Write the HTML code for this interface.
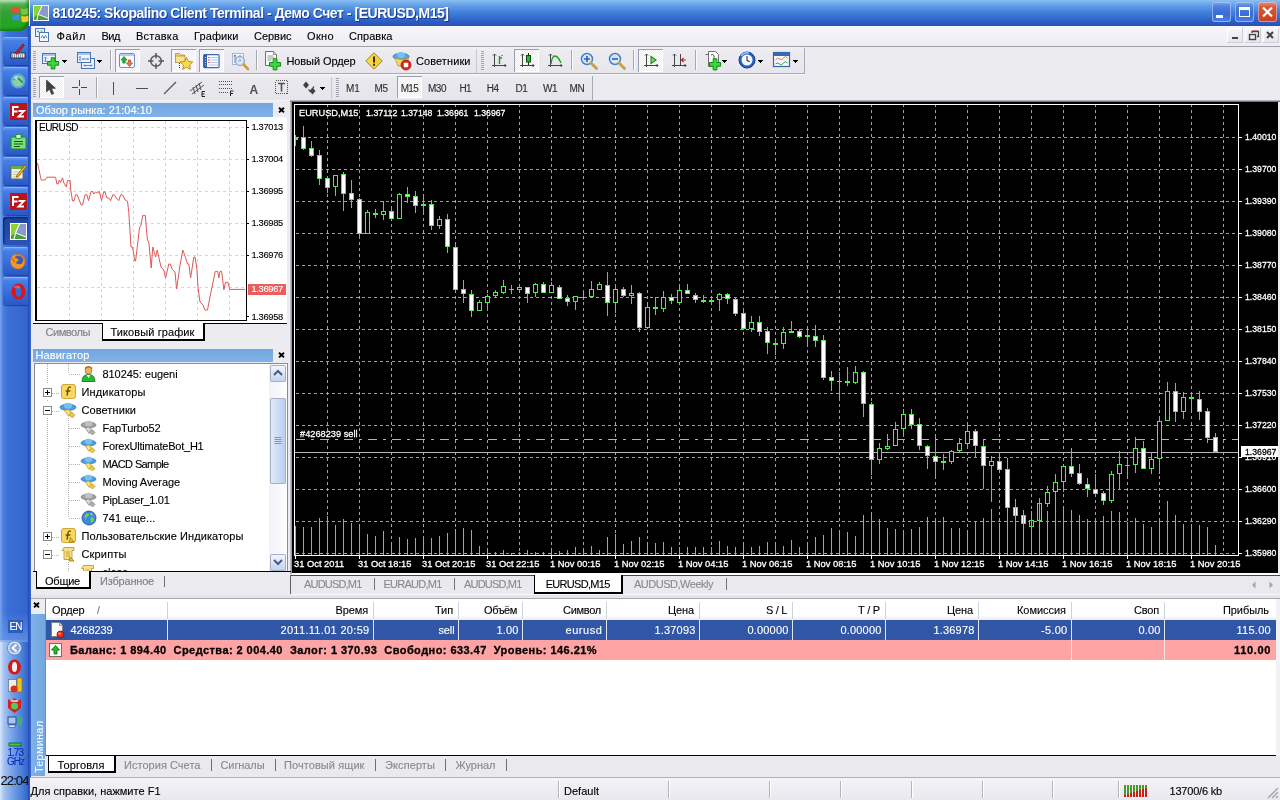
<!DOCTYPE html>
<html><head><meta charset="utf-8"><title>Terminal</title>
<style>
html,body{margin:0;padding:0;}
body{width:1280px;height:800px;overflow:hidden;position:relative;background:#ececf1;font-family:"Liberation Sans",sans-serif;}
.t{position:absolute;white-space:pre;font-family:"Liberation Sans",sans-serif;}
.b{position:absolute;}
svg{position:absolute;overflow:visible;}
</style></head><body><div id="root" style="position:absolute;left:0;top:0;width:1280px;height:800px;will-change:transform">
<div class="b" style="left:0px;top:0px;width:29px;height:800px;background:linear-gradient(90deg,#7aa6ee 0px,#4a80e0 3px,#3a6fd6 8px,#3566cf 26px,#2a55b8 30px);"></div>
<div class="b" style="left:0px;top:0px;width:29px;height:31px;background:linear-gradient(180deg,#8ed28e 0px,#4cae4c 5px,#35a035 12px,#26a226 22px,#1fae1f 31px);border-radius:0 0 9px 0;box-shadow:inset -2px -2px 3px rgba(0,60,0,.45), inset 0 2px 2px rgba(255,255,255,.35)"></div>
<svg width="21" height="21" style="left:9.500px;top:4px" viewBox="0 0 18 18" transform="rotate(-4)"><path d="M2 3q3-2 6 0v5q-3-2-6 0z" fill="#e8502a"/><path d="M9.5 3.6q3 2 6 0v5q-3 2-6 0z" fill="#7cc242"/><path d="M2 9.5q3-2 6 0v5q-3-2-6 0z" fill="#3a8ee8"/><path d="M9.5 10q3 2 6 0v5q-3 2-6 0z" fill="#f8c62a"/></svg>
<div class="b" style="left:3px;top:37px;width:26px;height:28px;background:linear-gradient(180deg,#6a9cf0 0px,#457fe4 4px,#376cd8 16px,#2b58c2 28px);border-radius:3px;box-shadow:inset 0 1px 0 rgba(255,255,255,.25), 0 1px 1px rgba(0,0,60,.4)"></div>
<div class="b" style="left:3px;top:67px;width:26px;height:28px;background:linear-gradient(180deg,#6a9cf0 0px,#457fe4 4px,#376cd8 16px,#2b58c2 28px);border-radius:3px;box-shadow:inset 0 1px 0 rgba(255,255,255,.25), 0 1px 1px rgba(0,0,60,.4)"></div>
<div class="b" style="left:3px;top:97px;width:26px;height:28px;background:linear-gradient(180deg,#6a9cf0 0px,#457fe4 4px,#376cd8 16px,#2b58c2 28px);border-radius:3px;box-shadow:inset 0 1px 0 rgba(255,255,255,.25), 0 1px 1px rgba(0,0,60,.4)"></div>
<div class="b" style="left:3px;top:127px;width:26px;height:28px;background:linear-gradient(180deg,#6a9cf0 0px,#457fe4 4px,#376cd8 16px,#2b58c2 28px);border-radius:3px;box-shadow:inset 0 1px 0 rgba(255,255,255,.25), 0 1px 1px rgba(0,0,60,.4)"></div>
<div class="b" style="left:3px;top:157px;width:26px;height:28px;background:linear-gradient(180deg,#6a9cf0 0px,#457fe4 4px,#376cd8 16px,#2b58c2 28px);border-radius:3px;box-shadow:inset 0 1px 0 rgba(255,255,255,.25), 0 1px 1px rgba(0,0,60,.4)"></div>
<div class="b" style="left:3px;top:187px;width:26px;height:28px;background:linear-gradient(180deg,#6a9cf0 0px,#457fe4 4px,#376cd8 16px,#2b58c2 28px);border-radius:3px;box-shadow:inset 0 1px 0 rgba(255,255,255,.25), 0 1px 1px rgba(0,0,60,.4)"></div>
<div class="b" style="left:3px;top:217px;width:26px;height:28px;background:linear-gradient(180deg,#1c449c,#234aa8 50%,#2a56b8);border-radius:3px;box-shadow:inset 1px 1px 2px rgba(0,0,40,.6)"></div>
<div class="b" style="left:3px;top:247px;width:26px;height:28px;background:linear-gradient(180deg,#6a9cf0 0px,#457fe4 4px,#376cd8 16px,#2b58c2 28px);border-radius:3px;box-shadow:inset 0 1px 0 rgba(255,255,255,.25), 0 1px 1px rgba(0,0,60,.4)"></div>
<div class="b" style="left:3px;top:277px;width:26px;height:28px;background:linear-gradient(180deg,#6a9cf0 0px,#457fe4 4px,#376cd8 16px,#2b58c2 28px);border-radius:3px;box-shadow:inset 0 1px 0 rgba(255,255,255,.25), 0 1px 1px rgba(0,0,60,.4)"></div>
<svg width="30" height="800" style="left:0;top:0"><g transform="translate(10,42)"><rect x="1" y="11" width="14" height="5" fill="#e8e8e8" stroke="#222" stroke-width=".8"/><path d="M2 13h12M2 15h12" stroke="#222" stroke-width=".8" stroke-dasharray="1 1"/><path d="M5 11l8-9 1.5 1.2-7 9z" fill="#c02020" stroke="#501010" stroke-width=".5"/></g><g transform="translate(10,73)"><circle cx="8" cy="8" r="7.5" fill="#5aa8d8"/><circle cx="8" cy="8" r="5.5" fill="#8fd0a0"/><path d="M4 7q2-3 5-1t3 4" stroke="#2a8a5a" stroke-width="1.6" fill="none"/><circle cx="6" cy="5" r="1.8" fill="#d8f0ff" opacity=".8"/></g><g transform="translate(10,103)"><rect x="0" y="0" width="17" height="17" fill="#b8141a"/><path d="M3 13V4h5.5M3 8.5h4.5" stroke="#fff" stroke-width="2" fill="none"/><path d="M8.5 8h5.5l-5.5 5.5h5.5" stroke="#fff" stroke-width="1.8" fill="none"/></g><g transform="translate(10,193)"><rect x="0" y="0" width="17" height="17" fill="#b8141a"/><path d="M3 13V4h5.5M3 8.5h4.5" stroke="#fff" stroke-width="2" fill="none"/><path d="M8.5 8h5.5l-5.5 5.5h5.5" stroke="#fff" stroke-width="1.8" fill="none"/></g><g transform="translate(10,133)"><rect x="1" y="4" width="15" height="12" rx="1" fill="#7be07b" stroke="#1e8a1e"/><rect x="6" y="1.5" width="5" height="4" fill="#d8ffd8" stroke="#1e8a1e" stroke-width=".8"/><path d="M4 8.5h9M4 11h9M4 13.500h6" stroke="#145a14" stroke-width="1.2"/></g><g transform="translate(10,163)"><rect x="1" y="3" width="12" height="13" fill="#f4f4e4" stroke="#666"/><rect x="1" y="3" width="12" height="3" fill="#6aa84a"/><path d="M3 9h8M3 11.500h8M3 14h6" stroke="#b8b8a0" stroke-width=".8"/><path d="M7 12l8-10 1.600 1.400-8 10-2.400.8z" fill="#f0b020" stroke="#7a4a00" stroke-width=".6"/></g><g transform="translate(10,223)"><rect x="0" y="0" width="17" height="17" fill="#fff"/><rect x="1" y="1" width="15" height="15" fill="#8a9aca"/><path d="M1 1h8.500l-4 9-4.500 3z" fill="#8ed22e"/><path d="M1 13l4.500-3 10.500 4v2h-15z" fill="#4c9c3c"/><path d="M4 16l1.500-6l4-9" stroke="#fff" stroke-width="1.100" fill="none"/><path d="M5.500 10l10.500 4" stroke="#fff" stroke-width="1" fill="none"/></g><g transform="translate(10,253)"><circle cx="8" cy="8.500" r="7.500" fill="#e87818"/><circle cx="8.500" cy="7.500" r="4.500" fill="#3858c8"/><path d="M1 6q1-4 5-5-2 2-1 4 3 0 4 2-2 1-3 3 2 2 5 1 2-1 3-4 1 5-3 8-5 2-9-2-2-3-1-7z" fill="#f09820"/><path d="M2 5q1 3 3 4" stroke="#c84810" stroke-width="1" fill="none"/></g><g transform="translate(10,283)"><ellipse cx="8.500" cy="8.500" rx="7" ry="8" fill="#d81818"/><ellipse cx="8.500" cy="8.500" rx="3" ry="5.500" fill="#3468d4"/><ellipse cx="7" cy="4" rx="3" ry="1.500" fill="#ff8a80" opacity=".5"/></g></svg>
<div class="b" style="left:0px;top:640px;width:28px;height:160px;background:linear-gradient(90deg,#d8e6fb 0px,#a4c2f0 4px,#709fe6 13px,#4a80da 22px,#3264c8 28px);"></div>
<div class="b" style="left:0px;top:612px;width:28px;height:30px;background:linear-gradient(180deg,rgba(58,111,214,0),rgba(120,165,235,.6));"></div>
<div class="b" style="left:8px;top:620px;width:15px;height:13px;background:#2c5cc0;"></div>
<span class="t" style="left:9.5px;top:622.03px;font-size:10px;line-height:10px;color:#fff;letter-spacing:-0.946px;-webkit-text-stroke:0.12px #fff;">EN</span>
<svg width="30" height="800" style="left:0;top:0"><circle cx="14.500" cy="648" r="7" fill="#d8e4f8" stroke="#6a8ac8"/><circle cx="14.500" cy="648" r="5" fill="#8aa8e0"/><path d="M16.500 644.500l-4 3.500 4 3.500" stroke="#fff" stroke-width="1.800" fill="none"/><ellipse cx="14.500" cy="667" rx="6.500" ry="7.500" fill="#d81818"/><ellipse cx="14.500" cy="667" rx="2.600" ry="5" fill="#f4f0f0"/><rect x="8.500" y="679.500" width="8" height="12" fill="#f0f0e8" stroke="#444" stroke-dasharray="1 1"/><rect x="17" y="678" width="5" height="14" fill="#f0c020" stroke="#8a6a00" stroke-width=".6"/><circle cx="14" cy="689" r="3.500" fill="#d83020"/><path d="M8 699l3 2 3.500-3 3.500 3 3-2v9l-6.500 5-6.500-5z" fill="#d82020"/><circle cx="14.500" cy="706" r="3.500" fill="#58c858"/><path d="M11 701h7" stroke="#e8e8e8" stroke-width="1.500"/><rect x="8" y="717" width="8" height="7" fill="#a8c8f0" stroke="#2a4a9a"/><rect x="9" y="725" width="6" height="2.500" fill="#e8e8f0" stroke="#2a4a9a" stroke-width=".6"/><path d="M18 718q2 3 0 6M20 716.500q3 4.500 0 9" stroke="#38c838" stroke-width="1.200" fill="none"/><rect x="9" y="743" width="12" height="3" fill="#30d040" stroke="#0a5a1a" stroke-width=".8"/></svg>
<span class="t" style="left:7.5px;top:748.03px;font-size:10px;line-height:10px;color:#1428c8;letter-spacing:-0.990px;-webkit-text-stroke:0.12px #1428c8;">1.73</span>
<span class="t" style="left:7px;top:757.03px;font-size:10px;line-height:10px;color:#1428c8;letter-spacing:-1.000px;-webkit-text-stroke:0.12px #1428c8;">GHz</span>
<span class="t" style="left:0.5px;top:774.00px;font-size:13px;line-height:13px;color:#101010;letter-spacing:-0.906px;-webkit-text-stroke:0.12px #101010;">22:04</span>
<div class="b" style="left:30px;top:0px;width:1250px;height:26px;background:linear-gradient(180deg,#8cc0f2 0px,#7ab2ee 2px,#5a98e6 7px,#4282dc 12px,#356fd2 17px,#2c5cc4 22px,#2a4fb4 26px);"></div>
<div class="b" style="left:28px;top:26px;width:3px;height:774px;background:linear-gradient(90deg,#2448b0,#3a6ad4);"></div>
<svg width="16" height="16" style="left:32.500px;top:4.500px" viewBox="0 0 17 17"><rect x="0" y="0" width="17" height="17" fill="#fff"/><rect x="1" y="1" width="15" height="15" fill="#8a9aca"/><path d="M1 1h8.500l-4 9-4.500 3z" fill="#8ed22e"/><path d="M1 13l4.500-3 10.500 4v2h-15z" fill="#4c9c3c"/><path d="M4 16l1.500-6l4-9" stroke="#fff" stroke-width="1.100" fill="none"/><path d="M5.500 10l10.500 4" stroke="#fff" stroke-width="1" fill="none"/></svg>
<span class="t" style="left:52.5px;top:5.95px;font-size:14px;line-height:14px;color:#fff;font-weight:bold;letter-spacing:-0.457px;text-shadow:1px 1px 0 rgba(10,30,100,.7);">810245: Skopalino Client Terminal - Демо Счет - [EURUSD,M15]</span>
<div class="b" style="left:1212px;top:2px;width:19px;height:20px;background:linear-gradient(180deg,#7aa6ec 0px,#4a80de 5px,#3a6cd4 12px,#4a80e0 20px);border-radius:3px;box-shadow:inset 0 0 0 1px rgba(200,220,255,.55);"></div>
<div class="b" style="left:1235px;top:2px;width:19px;height:20px;background:linear-gradient(180deg,#7aa6ec 0px,#4a80de 5px,#3a6cd4 12px,#4a80e0 20px);border-radius:3px;box-shadow:inset 0 0 0 1px rgba(200,220,255,.55);"></div>
<div class="b" style="left:1258px;top:2px;width:19px;height:20px;background:linear-gradient(180deg,#e89080 0px,#d85838 5px,#d84a28 12px,#c84020 20px);border-radius:3px;box-shadow:inset 0 0 0 1px rgba(200,220,255,.55);"></div>
<svg width="70" height="26" style="left:1210px;top:0"><rect x="6" y="15" width="7" height="3" fill="#fff"/><rect x="29.500" y="7.500" width="10" height="9" fill="none" stroke="#fff" stroke-width="1"/><rect x="29" y="7" width="11" height="3" fill="#fff"/><path d="M53 7.500l9 9M62 7.500l-9 9" stroke="#fff" stroke-width="2.200"/></svg>
<div class="b" style="left:31px;top:26px;width:1249px;height:21px;background:linear-gradient(180deg,#f6f6fa,#ececf2);"></div>
<div class="b" style="left:31px;top:46px;width:1249px;height:1px;background:#a0a0a8;"></div>
<svg width="16" height="16" style="left:34px;top:27px" viewBox="0 0 16 16"><rect x="1.500" y="1.500" width="9" height="8" fill="#eaf2fb" stroke="#4a78b8"/><rect x="5.500" y="5.500" width="9" height="9" fill="#f4f8fd" stroke="#4a78b8"/><path d="M7 11l1.500-2.500 1.500 3 1.500-3 1.500 2.500" stroke="#4a78b8" stroke-width=".9" fill="none"/><path d="M3 4.500h2M4 3.500v2M6.500 4h2" stroke="#4a78b8" stroke-width=".8"/></svg>
<span class="t" style="left:56.5px;top:30.69px;font-size:11px;line-height:11px;color:#000;letter-spacing:0.614px;-webkit-text-stroke:0.12px #000;">Файл</span>
<span class="t" style="left:101.5px;top:30.69px;font-size:11px;line-height:11px;color:#000;letter-spacing:-0.467px;-webkit-text-stroke:0.12px #000;">Вид</span>
<span class="t" style="left:136px;top:30.69px;font-size:11px;line-height:11px;color:#000;letter-spacing:0.231px;-webkit-text-stroke:0.12px #000;">Вставка</span>
<span class="t" style="left:194px;top:30.69px;font-size:11px;line-height:11px;color:#000;letter-spacing:0.110px;-webkit-text-stroke:0.12px #000;">Графики</span>
<span class="t" style="left:254px;top:30.69px;font-size:11px;line-height:11px;color:#000;letter-spacing:-0.028px;-webkit-text-stroke:0.12px #000;">Сервис</span>
<span class="t" style="left:307px;top:30.69px;font-size:11px;line-height:11px;color:#000;letter-spacing:0.360px;-webkit-text-stroke:0.12px #000;">Окно</span>
<span class="t" style="left:349px;top:30.69px;font-size:11px;line-height:11px;color:#000;letter-spacing:0.050px;-webkit-text-stroke:0.12px #000;">Справка</span>
<div class="b" style="left:1227px;top:28px;width:16px;height:15px;background:linear-gradient(180deg,#f8f8fb,#e4e4ea);box-shadow:inset -1px -1px 0 #d0d0d8, inset 1px 1px 0 #fff;"></div>
<div class="b" style="left:1245px;top:28px;width:16px;height:15px;background:linear-gradient(180deg,#f8f8fb,#e4e4ea);box-shadow:inset -1px -1px 0 #d0d0d8, inset 1px 1px 0 #fff;"></div>
<div class="b" style="left:1263px;top:28px;width:16px;height:15px;background:linear-gradient(180deg,#f8f8fb,#e4e4ea);box-shadow:inset -1px -1px 0 #d0d0d8, inset 1px 1px 0 #fff;"></div>
<svg width="60" height="20" style="left:1225px;top:26px"><rect x="7" y="11" width="6" height="2" fill="#444"/><rect x="24.500" y="8.500" width="6" height="5" fill="none" stroke="#444" stroke-width="1.400"/><path d="M27 7v-1.500h6.500v5h-1.500" fill="none" stroke="#444" stroke-width="1.300"/><path d="M27 5h6" stroke="#a03030" stroke-width="1"/><path d="M42 6l6 6M48 6l-6 6" stroke="#444" stroke-width="2"/></svg>
<div class="b" style="left:31px;top:47px;width:1249px;height:54px;background:#ebebf0;"></div>
<div class="b" style="left:31px;top:47px;width:774px;height:27px;background:linear-gradient(180deg,#f2f2f6 0px,#ebebf0 4px,#e6e6ec 27px);"></div>
<div class="b" style="left:31px;top:73px;width:774px;height:1px;background:#a9a9b3;"></div>
<div class="b" style="left:31px;top:74px;width:774px;height:1px;background:#f8f8fb;"></div>
<div class="b" style="left:804px;top:48px;width:1px;height:26px;background:#a9a9b3;"></div>
<div class="b" style="left:31px;top:75px;width:562px;height:25px;background:linear-gradient(180deg,#f0f0f5 0px,#e9e9ee 4px,#e5e5eb 25px);"></div>
<div class="b" style="left:31px;top:100px;width:1249px;height:1px;background:#f4f4f8;"></div>
<div class="b" style="left:33px;top:51px;width:3px;height:19px;background:repeating-linear-gradient(180deg,#a4a4b0 0px,#a4a4b0 1px,transparent 1px,transparent 2px)"></div>
<svg width="18" height="18" viewBox="0 0 18 18" style="left:42px;top:52px"><rect x="0.500" y="1.500" width="13" height="10" fill="#eef4fc" stroke="#4a74b4"/><rect x="1" y="2" width="12" height="2" fill="#a8c4ea"/><path d="M3.500 5v5M2 6.500l1.500-1.500 1.500 1.500M2 8.500l1.500 1.500 1.500-1.500" stroke="#5a7fb8" stroke-width=".9" fill="none"/><path d="M5.5 9.5h3.700v-3.700h3.700v3.700h3.700v3.700h-3.700v3.700h-3.700v-3.700h-3.700z" fill="#3cd83c" stroke="#148a14" stroke-width="1"/></svg>
<svg width="5" height="3" style="left:62px;top:60px" shape-rendering="crispEdges"><path d="M0 0h5v1h-1v1h-1v1h-1v-1h-1v-1h-1z" fill="#000"/></svg>
<svg width="19" height="18" viewBox="0 0 19 18" style="left:77px;top:52px"><rect x="4.500" y="6.500" width="13" height="10" fill="#eaf1fb" stroke="#4a74b4"/><rect x="0.500" y="0.500" width="13" height="10" fill="#eef4fc" stroke="#4a74b4"/><rect x="1" y="1" width="12" height="2" fill="#a8c4ea"/><path d="M3 4.500v4M2 5.500l1-1 1 1M2 7.500l1 1 1-1M5.500 7h6M6.500 6l-1 1 1 1M10.500 6l1 1-1 1M7 13.500h8M8 12.500l-1 1 1 1M14 12.500l1 1-1 1" stroke="#5a7fb8" stroke-width=".9" fill="none"/></svg>
<svg width="5" height="3" style="left:97px;top:60px" shape-rendering="crispEdges"><path d="M0 0h5v1h-1v1h-1v1h-1v-1h-1v-1h-1z" fill="#000"/></svg>
<div class="b" style="left:110px;top:50px;width:1px;height:20px;background:#a8a8b2;"></div>
<div class="b" style="left:111px;top:50px;width:1px;height:20px;background:#fbfbfd;"></div>
<div class="b" style="left:115px;top:49px;width:25px;height:23px;background:#f5f5f9;box-shadow:inset 1px 1px 0 #9a9eb0, inset -1px -1px 0 #fff;background-image:repeating-conic-gradient(#ffffff 0% 25%, #ececf2 0% 50%);background-size:2px 2px;"></div>
<svg width="16" height="16" viewBox="0 0 16 16" style="left:119px;top:53px"><rect x="0.500" y="0.500" width="15" height="14" rx="1.500" fill="#f8fafe" stroke="#6a90cc"/><rect x="1" y="1" width="14" height="2" fill="#b4ccee"/><path d="M5 3.500l3 3.500h-1.800v3h-2.400v-3h-1.800z" fill="#2cb82c" stroke="#0e7a0e" stroke-width=".7"/><path d="M10.500 13.500l-3-3.500h1.800v-3h2.400v3h1.800z" fill="#f07850" stroke="#b03818" stroke-width=".7"/></svg>
<svg width="18" height="18" viewBox="0 0 18 18" style="left:147px;top:52px"><circle cx="9" cy="9" r="5.300" fill="none" stroke="#585858" stroke-width="1.500"/><path d="M9 1v5.500M9 11.500v5.500M1 9h5.500M11.500 9h5.500" stroke="#585858" stroke-width="1.500"/></svg>
<div class="b" style="left:171px;top:49px;width:25px;height:23px;background:#f5f5f9;box-shadow:inset 1px 1px 0 #9a9eb0, inset -1px -1px 0 #fff;background-image:repeating-conic-gradient(#ffffff 0% 25%, #ececf2 0% 50%);background-size:2px 2px;"></div>
<svg width="20" height="20" viewBox="0 0 20 20" style="left:174px;top:51px"><path d="M1.500 5v-2.500h4l1 1.500h4v1" fill="#f2d878" stroke="#b89028" stroke-width=".8"/><rect x="1.500" y="5" width="9.500" height="6.500" fill="#f8e498" stroke="#b89028" stroke-width=".8"/><path d="M5.500 12v6" stroke="#333" stroke-width="1" stroke-dasharray="1 1"/><path d="M12.500 6.500l1.900 3.900 4.300.6-3.100 3 .7 4.300-3.800-2-3.800 2 .7-4.300-3.100-3 4.300-.6z" fill="#f8dc50" stroke="#b08818" stroke-width=".9"/></svg>
<div class="b" style="left:199px;top:49px;width:25px;height:23px;background:#f5f5f9;box-shadow:inset 1px 1px 0 #9a9eb0, inset -1px -1px 0 #fff;background-image:repeating-conic-gradient(#ffffff 0% 25%, #ececf2 0% 50%);background-size:2px 2px;"></div>
<svg width="17" height="15" viewBox="0 0 17 15" style="left:203px;top:53.5px"><rect x="0.600" y="0.600" width="15.500" height="13" rx="1" fill="#f8fbff" stroke="#3e68b0" stroke-width="1.200"/><rect x="1" y="1" width="3" height="12.200" fill="#2e5aa8"/><path d="M5.500 3.500h9.500M5.500 6h9.500M5.500 8.500h9.500M5.500 11h9.500" stroke="#a0bce4" stroke-width=".8"/><path d="M5 3.500h1.500M5 6h1.500M5 8.500h1.500" stroke="#e05050" stroke-width="1"/><path d="M1.800 3.500h1.400M1.800 6h1.400M1.800 8.500h1.400M1.800 11h1.400" stroke="#d8e4f8" stroke-width=".8"/></svg>
<svg width="20" height="20" viewBox="0 0 20 20" style="left:231px;top:52px"><rect x="1.500" y="1.500" width="11" height="11" fill="#f2f6fb" stroke="#a8b8d0"/><path d="M4 3v8M9 3v4M3 4.500l1-1.500 1 1.500M7 5h3" stroke="#5878a8" stroke-width=".9" fill="none"/><circle cx="9" cy="9" r="4.500" fill="#cfe4f8" fill-opacity=".8" stroke="#8aa4c8" stroke-width="1.200"/><path d="M7.500 9.500q1-2.500 2.500-1" stroke="#7a90b0" stroke-width="1" fill="none"/><path d="M12.500 12.500l4.500 4.500" stroke="#c8a038" stroke-width="2.600" stroke-linecap="round"/></svg>
<div class="b" style="left:256px;top:50px;width:1px;height:20px;background:#a8a8b2;"></div>
<div class="b" style="left:257px;top:50px;width:1px;height:20px;background:#fbfbfd;"></div>
<svg width="19" height="20" viewBox="0 0 19 20" style="left:264px;top:51px"><path d="M1.500 0.500h8l3 3v11h-11z" fill="#fbfbfb" stroke="#707070"/><path d="M9.500 0.500v3h3" fill="#e0e0e0" stroke="#707070" stroke-width=".8"/><path d="M3.500 5h6M3.500 7h7M3.500 9h4" stroke="#8a8a8a" stroke-width=".9"/><path d="M5.5 11.5h3.700v-3.700h3.700v3.700h3.700v3.700h-3.700v3.700h-3.700v-3.700h-3.700z" fill="#3cd83c" stroke="#148a14" stroke-width="1"/></svg>
<span class="t" style="left:286.5px;top:55.69px;font-size:11px;line-height:11px;color:#000;letter-spacing:-0.099px;-webkit-text-stroke:0.12px #000;">Новый Ордер</span>
<svg width="18" height="18" viewBox="0 0 18 18" style="left:365px;top:52px"><path d="M9 0.800l8.200 8.200-8.200 8.200-8.200-8.200z" fill="#f8d848" stroke="#a88410" stroke-width="1"/><path d="M9 2.600l6.400 6.400-6.400 6.400" fill="#f0c428" opacity=".6"/><rect x="8" y="4.500" width="2" height="6" fill="#3a2a00"/><rect x="8" y="11.700" width="2" height="2" fill="#3a2a00"/></svg>
<svg width="20" height="20" viewBox="0 0 20 20" style="left:392px;top:51px"><ellipse cx="9" cy="5.500" rx="8" ry="3.200" fill="#58a8e0" stroke="#2a6aa8" stroke-width=".7"/><ellipse cx="9" cy="4" rx="4" ry="3" fill="#78c0f0"/><path d="M3 7l3 8h8l2.500-8q-7 3-13.500 0z" fill="#f8d860" stroke="#b89020" stroke-width=".7"/><circle cx="14" cy="14" r="5" fill="#e02818" stroke="#8a1008" stroke-width=".7"/><rect x="11.800" y="11.800" width="4.400" height="4.400" fill="#fff"/></svg>
<span class="t" style="left:416px;top:55.69px;font-size:11px;line-height:11px;color:#000;letter-spacing:0.084px;-webkit-text-stroke:0.12px #000;">Советники</span>
<div class="b" style="left:476px;top:49px;width:1px;height:24px;background:#c8c8d0;"></div>
<div class="b" style="left:481px;top:51px;width:3px;height:19px;background:repeating-linear-gradient(180deg,#a4a4b0 0px,#a4a4b0 1px,transparent 1px,transparent 2px)"></div>
<svg width="17" height="17" viewBox="0 0 17 17" style="left:491px;top:52px"><path d="M3.500 2v13M1 13.500h14M2 3.500l1.500-1.500 1.500 1.500M13.500 12l1.500 1.500-1.500 1.500" stroke="#444" stroke-width="1" fill="none"/><path d="M8.500 4v8M8.500 6h2.500M11 4v-1" stroke="#1e9a1e" stroke-width="1.400" fill="none"/></svg>
<div class="b" style="left:514px;top:49px;width:25px;height:23px;background:#f5f5f9;box-shadow:inset 1px 1px 0 #9a9eb0, inset -1px -1px 0 #fff;background-image:repeating-conic-gradient(#ffffff 0% 25%, #ececf2 0% 50%);background-size:2px 2px;"></div>
<svg width="17" height="17" viewBox="0 0 17 17" style="left:519px;top:52px"><path d="M3.500 2v13M1 13.500h14M2 3.500l1.500-1.500 1.500 1.500M13.500 12l1.500 1.500-1.500 1.500" stroke="#444" stroke-width="1" fill="none"/><path d="M9.500 1v12" stroke="#222" stroke-width="1"/><rect x="7.500" y="3.500" width="4" height="6.500" fill="#28b828" stroke="#0a500a"/></svg>
<svg width="17" height="17" viewBox="0 0 17 17" style="left:547px;top:52px"><path d="M3.500 2v13M1 13.500h14M2 3.500l1.500-1.500 1.500 1.500M13.500 12l1.500 1.500-1.500 1.500" stroke="#444" stroke-width="1" fill="none"/><path d="M4 12q1-8 4-8t6 7" stroke="#1e9a1e" stroke-width="1.300" fill="none"/></svg>
<div class="b" style="left:571px;top:50px;width:1px;height:20px;background:#a8a8b2;"></div>
<div class="b" style="left:572px;top:50px;width:1px;height:20px;background:#fbfbfd;"></div>
<svg width="19" height="19" viewBox="0 0 19 19" style="left:580px;top:52px"><circle cx="7" cy="7" r="5.500" fill="#d4e8fa" stroke="#4a80c8" stroke-width="1.500"/><path d="M11 11l5.500 5.500" stroke="#c8a040" stroke-width="2.800" stroke-linecap="round"/><path d="M4 7h6M7 4v6" stroke="#2a60b0" stroke-width="1.600"/></svg>
<svg width="19" height="19" viewBox="0 0 19 19" style="left:608px;top:52px"><circle cx="7" cy="7" r="5.500" fill="#d4e8fa" stroke="#4a80c8" stroke-width="1.500"/><path d="M11 11l5.500 5.500" stroke="#c8a040" stroke-width="2.800" stroke-linecap="round"/><path d="M4 7h6" stroke="#2a60b0" stroke-width="1.600"/></svg>
<div class="b" style="left:633px;top:50px;width:1px;height:20px;background:#a8a8b2;"></div>
<div class="b" style="left:634px;top:50px;width:1px;height:20px;background:#fbfbfd;"></div>
<div class="b" style="left:638px;top:49px;width:25px;height:23px;background:#f5f5f9;box-shadow:inset 1px 1px 0 #9a9eb0, inset -1px -1px 0 #fff;background-image:repeating-conic-gradient(#ffffff 0% 25%, #ececf2 0% 50%);background-size:2px 2px;"></div>
<svg width="17" height="17" viewBox="0 0 17 17" style="left:643px;top:52px"><path d="M3.500 2v13M1 13.500h14M2 3.500l1.500-1.500 1.500 1.500M13.500 12l1.500 1.500-1.500 1.500" stroke="#444" stroke-width="1" fill="none"/><path d="M8 4.500l5 3.500-5 3.500z" fill="#7ae07a" stroke="#1a8a1a" stroke-width="1.100"/></svg>
<svg width="17" height="17" viewBox="0 0 17 17" style="left:671px;top:52px"><path d="M3.500 2v13M1 13.500h14M2 3.500l1.500-1.500 1.500 1.500M13.500 12l1.500 1.500-1.500 1.500" stroke="#444" stroke-width="1" fill="none"/><path d="M9.500 2v11" stroke="#444" stroke-width="1"/><path d="M15 8h-4M12.500 6l-2 2 2 2" stroke="#c02020" stroke-width="1.200" fill="none"/></svg>
<div class="b" style="left:695px;top:50px;width:1px;height:20px;background:#a8a8b2;"></div>
<div class="b" style="left:696px;top:50px;width:1px;height:20px;background:#fbfbfd;"></div>
<svg width="18" height="20" viewBox="0 0 18 20" style="left:704px;top:51px"><path d="M4.500 0.500h7l3 3v10h-10z" fill="#fbfbfb" stroke="#707070"/><path d="M1.500 3.500h3v12h8" fill="none" stroke="#707070"/><path d="M7 4q2-2 3 1v5" stroke="#555" stroke-width="1" fill="none"/><path d="M5.5 11.5h3.700v-3.700h3.700v3.700h3.700v3.700h-3.700v3.700h-3.700v-3.700h-3.700z" fill="#3cd83c" stroke="#148a14" stroke-width="1"/></svg>
<svg width="5" height="3" style="left:722px;top:60px" shape-rendering="crispEdges"><path d="M0 0h5v1h-1v1h-1v1h-1v-1h-1v-1h-1z" fill="#000"/></svg>
<svg width="18" height="18" viewBox="0 0 18 18" style="left:738px;top:51px"><circle cx="9" cy="9" r="8" fill="#2a62c8" stroke="#16388a" stroke-width="1"/><circle cx="9" cy="9" r="5.500" fill="#f4f8ff"/><path d="M9 5v4.300l2.600 1.400" stroke="#334" stroke-width="1.100" fill="none"/><path d="M3 5q3-4 8-3" stroke="#9cc0f8" stroke-width="1.400" fill="none"/></svg>
<svg width="5" height="3" style="left:758px;top:60px" shape-rendering="crispEdges"><path d="M0 0h5v1h-1v1h-1v1h-1v-1h-1v-1h-1z" fill="#000"/></svg>
<svg width="18" height="16" viewBox="0 0 18 16" style="left:773px;top:52px"><rect x="0.500" y="0.500" width="16" height="14" fill="#f6f9fd" stroke="#3a64a8" stroke-width="1.200"/><rect x="1" y="1" width="15" height="3" fill="#3a68b8"/><path d="M2.500 8q2-3 4-1t4-1 4 0" stroke="#e07830" stroke-width="1" fill="none"/><path d="M2.500 12q2-2 4 0t4-1 4 0" stroke="#30a030" stroke-width="1" fill="none"/></svg>
<svg width="5" height="3" style="left:793px;top:60px" shape-rendering="crispEdges"><path d="M0 0h5v1h-1v1h-1v1h-1v-1h-1v-1h-1z" fill="#000"/></svg>
<div class="b" style="left:33px;top:78px;width:3px;height:19px;background:repeating-linear-gradient(180deg,#a4a4b0 0px,#a4a4b0 1px,transparent 1px,transparent 2px)"></div>
<div class="b" style="left:39px;top:76px;width:25px;height:22px;background:#f5f5f9;box-shadow:inset 1px 1px 0 #9a9eb0, inset -1px -1px 0 #fff;background-image:repeating-conic-gradient(#ffffff 0% 25%, #ececf2 0% 50%);background-size:2px 2px;"></div>
<svg width="12" height="17" viewBox="0 0 12 17" style="left:45px;top:79px"><path d="M1.500 1v12l3-2.800 2.200 5.300 2-.9-2.200-5.100 4-.3z" fill="#404040" stroke="#303030" stroke-width=".6"/></svg>
<svg width="16" height="16" viewBox="0 0 16 16" style="left:72px;top:80px"><path shape-rendering="crispEdges" d="M7.500 0v6M7.500 9v6M0 7.500h6M9 7.500h6" stroke="#484848" stroke-width="1"/></svg>
<div class="b" style="left:96px;top:77px;width:1px;height:21px;background:#a8a8b2;"></div>
<div class="b" style="left:97px;top:77px;width:1px;height:21px;background:#fbfbfd;"></div>
<div class="b" style="left:113px;top:82px;width:1px;height:13px;background:#505050;"></div>
<div class="b" style="left:136px;top:88px;width:12px;height:1px;background:#505050;"></div>
<svg width="14" height="14" viewBox="0 0 14 14" style="left:163px;top:81px"><path d="M1 13L13 1" stroke="#585858" stroke-width="1.200"/></svg>
<svg width="18" height="18" viewBox="0 0 18 18" style="left:189px;top:79px"><path d="M1 12L13 3M3 15L15 6M4 8l2 7M7 6l2 7M10 4l2 7" stroke="#505050" stroke-width="1" fill="none"/><path d="M13 12.500h3M13 12.500v5h3M13 15h2.500" stroke="#222" stroke-width="1" fill="none"/></svg>
<svg width="18" height="18" viewBox="0 0 18 18" style="left:218px;top:79px"><path d="M1 2.500h13M1 5.500h13M1 9.500h13M1 13.500h9" stroke="#505050" stroke-width="1" stroke-dasharray="1 1"/><path d="M12.500 17v-5h3M12.500 14.500h2.500" stroke="#222" stroke-width="1" fill="none"/></svg>
<span class="t" style="left:249.5px;top:83.84px;font-size:12px;line-height:12px;color:#505050;font-weight:bold;">A</span>
<svg width="14" height="15" viewBox="0 0 14 15" style="left:275px;top:80px"><rect shape-rendering="crispEdges" x="0.500" y="0.500" width="12" height="13" fill="none" stroke="#505050" stroke-dasharray="1 1"/><path d="M3 3.500h7M6.500 3.500v8" stroke="#505050" stroke-width="1.600"/></svg>
<svg width="15" height="14" viewBox="0 0 15 14" style="left:302px;top:81px"><path d="M4 0.500l3 3.500-3 3.500-3-3.500z" fill="#404040"/><path d="M10.500 6.500l3 3.500-3 3.500-3-3.500z" fill="#404040"/><path d="M6.500 8.500l2 2 3.500-5" stroke="#404040" stroke-width="1.200" fill="none"/></svg>
<svg width="5" height="3" style="left:320px;top:87px" shape-rendering="crispEdges"><path d="M0 0h5v1h-1v1h-1v1h-1v-1h-1v-1h-1z" fill="#000"/></svg>
<div class="b" style="left:331px;top:77px;width:1px;height:22px;background:#c8c8d0;"></div>
<div class="b" style="left:336px;top:78px;width:3px;height:19px;background:repeating-linear-gradient(180deg,#a4a4b0 0px,#a4a4b0 1px,transparent 1px,transparent 2px)"></div>
<div class="b" style="left:397px;top:76px;width:25px;height:22px;background:#f5f5f9;box-shadow:inset 1px 1px 0 #9a9eb0, inset -1px -1px 0 #fff;background-image:repeating-conic-gradient(#ffffff 0% 25%, #ececf2 0% 50%);background-size:2px 2px;"></div>
<span class="t" style="left:346px;top:83.53px;font-size:10px;line-height:10px;color:#303030;letter-spacing:-0.195px;-webkit-text-stroke:0.12px #303030;">M1</span>
<span class="t" style="left:374.5px;top:83.53px;font-size:10px;line-height:10px;color:#303030;letter-spacing:-0.445px;-webkit-text-stroke:0.12px #303030;">M5</span>
<span class="t" style="left:400.7px;top:83.53px;font-size:10px;line-height:10px;color:#303030;letter-spacing:-0.651px;-webkit-text-stroke:0.12px #303030;">M15</span>
<span class="t" style="left:428px;top:83.53px;font-size:10px;line-height:10px;color:#303030;letter-spacing:-0.484px;-webkit-text-stroke:0.12px #303030;">M30</span>
<span class="t" style="left:459.5px;top:83.53px;font-size:10px;line-height:10px;color:#303030;letter-spacing:-0.641px;-webkit-text-stroke:0.12px #303030;">H1</span>
<span class="t" style="left:486.7px;top:83.53px;font-size:10px;line-height:10px;color:#303030;letter-spacing:-0.391px;-webkit-text-stroke:0.12px #303030;">H4</span>
<span class="t" style="left:515.5px;top:83.53px;font-size:10px;line-height:10px;color:#303030;letter-spacing:-0.391px;-webkit-text-stroke:0.12px #303030;">D1</span>
<span class="t" style="left:543px;top:83.53px;font-size:10px;line-height:10px;color:#303030;letter-spacing:-0.500px;-webkit-text-stroke:0.12px #303030;">W1</span>
<span class="t" style="left:569.5px;top:83.53px;font-size:10px;line-height:10px;color:#303030;letter-spacing:-0.276px;-webkit-text-stroke:0.12px #303030;">MN</span>
<div class="b" style="left:592px;top:76px;width:1px;height:24px;background:#a9a9b3;"></div>
<div class="b" style="left:31px;top:101px;width:261px;height:497px;background:#ebebf0;"></div>
<div class="b" style="left:290px;top:101px;width:2px;height:473px;background:linear-gradient(90deg,#c8c8d0,#8a8a92);"></div>
<div class="b" style="left:33px;top:103px;width:240px;height:14px;background:linear-gradient(180deg,#72a6e0,#80b2e8);"></div>
<span class="t" style="left:36px;top:104.69px;font-size:11px;line-height:11px;color:#fff;letter-spacing:0.047px;-webkit-text-stroke:0.12px #fff;">Обзор рынка: 21:04:10</span>
<svg width="8" height="7" style="left:277.5px;top:106.5px"><path d="M1 0.800l5 4.600M6 0.800l-5 4.600" stroke="#000" stroke-width="1.900"/></svg>
<div class="b" style="left:33px;top:117px;width:254px;height:206px;background:#fff;"></div>
<div class="b" style="left:35px;top:120px;width:212px;height:201px;background:#fff;box-sizing:border-box;border:1px solid #000;border-left-width:2px;"></div>
<svg width="300" height="340" style="left:0;top:0" shape-rendering="crispEdges"><path d="M69.5 121V320 M101.5 121V320 M133.5 121V320 M165.5 121V320 M197.5 121V320 M229.5 121V320" stroke="#d2d2d2" stroke-width="1" stroke-dasharray="3 3" fill="none"/><path d="M37 127.5H246 M37 159.5H246 M37 191.5H246 M37 223.5H246 M37 255.5H246 M37 287.5H246" stroke="#efcaca" stroke-width="1" stroke-dasharray="3 3" fill="none"/><path d="M246 127.5h3 M246 159.5h3 M246 191.5h3 M246 223.5h3 M246 255.5h3 M246 316.5h3" stroke="#000" stroke-width="1" fill="none"/></svg><svg width="300" height="340" style="left:0;top:0"><polyline points="37.5,163.0 41.2,180.0 45.0,180.0 46.9,177.2 55.6,177.2 56.9,184.0 58.0,184.0 59.4,180.0 60.6,182.5 62.5,177.8 63.8,182.8 66.2,186.9 67.5,180.6 70.2,180.6 70.6,188.8 72.5,201.0 74.0,201.0 75.6,194.8 77.2,194.8 81.2,205.0 82.5,205.0 85.0,194.8 86.9,194.8 88.5,200.6 91.0,191.5 92.5,191.5 93.8,194.0 95.6,191.9 97.5,193.0 99.4,191.5 101.5,200.6 103.8,191.9 105.0,191.9 106.9,198.0 108.8,198.0 110.6,200.6 112.8,194.8 114.4,194.8 116.2,198.0 118.8,200.6 120.6,194.8 122.5,194.8 125.2,200.0 127.5,201.2 128.8,212.5 131.0,247.0 132.5,247.0 134.8,261.0 135.6,261.0 139.5,228.0 141.0,225.0 142.7,215.6 145.3,215.6 147.3,239.0 148.9,243.0 151.2,268.0 152.8,247.0 155.6,257.0 157.2,250.0 161.0,267.0 163.8,270.0 165.6,278.0 168.8,264.0 170.3,264.0 172.3,269.5 175.0,272.0 176.6,289.0 180.0,265.6 182.8,250.0 185.6,257.8 187.5,264.0 188.8,264.0 190.6,278.0 193.8,257.0 195.0,257.0 196.9,268.8 198.0,287.5 200.0,302.0 202.8,304.7 205.0,310.0 207.5,310.0 210.6,293.8 215.3,271.4 217.7,271.4 218.8,278.0 220.0,271.4 221.6,271.4 223.9,289.8 225.5,282.3 228.0,282.3 229.7,289.4 245.0,289.4" fill="none" stroke="#dc5858" stroke-width="1" stroke-linejoin="round"/></svg>
<span class="t" style="left:38px;top:123.03px;font-size:10px;line-height:10px;color:#000;letter-spacing:-0.538px;background:#fff;padding:0 2px 0 1px;-webkit-text-stroke:0.12px #000;">EURUSD</span>
<span class="t" style="left:251.5px;top:123.10px;font-size:9.33px;line-height:9.33px;color:#000;letter-spacing:-0.332px;-webkit-text-stroke:0.12px #000;">1.37013</span>
<span class="t" style="left:251.5px;top:155.10px;font-size:9.33px;line-height:9.33px;color:#000;letter-spacing:-0.332px;-webkit-text-stroke:0.12px #000;">1.37004</span>
<span class="t" style="left:251.5px;top:187.10px;font-size:9.33px;line-height:9.33px;color:#000;letter-spacing:-0.332px;-webkit-text-stroke:0.12px #000;">1.36995</span>
<span class="t" style="left:251.5px;top:219.10px;font-size:9.33px;line-height:9.33px;color:#000;letter-spacing:-0.332px;-webkit-text-stroke:0.12px #000;">1.36985</span>
<span class="t" style="left:251.5px;top:251.10px;font-size:9.33px;line-height:9.33px;color:#000;letter-spacing:-0.332px;-webkit-text-stroke:0.12px #000;">1.36976</span>
<span class="t" style="left:251.5px;top:313.10px;font-size:9.33px;line-height:9.33px;color:#000;letter-spacing:-0.332px;-webkit-text-stroke:0.12px #000;">1.36958</span>
<div class="b" style="left:248px;top:284px;width:38px;height:11px;background:#ee5c5c;"></div>
<span class="t" style="left:251.5px;top:285.10px;font-size:9.33px;line-height:9.33px;color:#fff;letter-spacing:-0.332px;-webkit-text-stroke:0.12px #fff;">1.36967</span>
<div class="b" style="left:33px;top:323px;width:254px;height:1px;background:#000;"></div>
<span class="t" style="left:45.5px;top:326.69px;font-size:11px;line-height:11px;color:#808080;letter-spacing:-0.439px;-webkit-text-stroke:0.12px #808080;">Символы</span>
<div class="b" style="left:102px;top:323px;width:103px;height:18px;background:#fff;box-sizing:border-box;border:1px solid #000;border-top:none;border-right-width:2px;border-bottom-width:2px;"></div>
<span class="t" style="left:110.5px;top:326.69px;font-size:11px;line-height:11px;color:#000;letter-spacing:0.097px;-webkit-text-stroke:0.12px #000;">Тиковый график</span>
<div class="b" style="left:33px;top:349px;width:240px;height:13px;background:linear-gradient(180deg,#72a6e0,#80b2e8);"></div>
<span class="t" style="left:35.5px;top:350.19px;font-size:11px;line-height:11px;color:#fff;letter-spacing:0.129px;-webkit-text-stroke:0.12px #fff;">Навигатор</span>
<svg width="8" height="7" style="left:277.5px;top:352px"><path d="M1 0.800l5 4.600M6 0.800l-5 4.600" stroke="#000" stroke-width="1.900"/></svg>
<div class="b" style="left:34px;top:363px;width:254px;height:209px;background:#fff;box-sizing:border-box;border:1px solid #8a8a98;"></div>
<div class="b" style="left:269px;top:364px;width:18px;height:207px;background:linear-gradient(90deg,#f0f2f8,#fdfdfe);"></div>
<div class="b" style="left:270px;top:365px;width:16px;height:17px;background:linear-gradient(180deg,#f4f8ff,#c0d0f0);border-radius:2px;box-shadow:inset 0 0 0 1px #a8b0c8;"></div>
<svg width="16" height="17" style="left:270px;top:365px"><path d="M4 10l4-4 4 4" stroke="#4a5a84" stroke-width="2" fill="none"/></svg>
<div class="b" style="left:270px;top:554px;width:16px;height:17px;background:linear-gradient(180deg,#f4f8ff,#c0d0f0);border-radius:2px;box-shadow:inset 0 0 0 1px #a8b0c8;"></div>
<svg width="16" height="17" style="left:270px;top:554px"><path d="M4 6l4 4 4-4" stroke="#4a5a84" stroke-width="2" fill="none"/></svg>
<div class="b" style="left:270px;top:398px;width:16px;height:86px;background:linear-gradient(90deg,#e4ecfc,#b8ccf0);border-radius:2px;box-shadow:inset 0 0 0 1px #a8b0c8;"></div>
<svg width="16" height="10" style="left:270px;top:436px"><path d="M4.500 1.500h7M4.500 3.500h7M4.500 5.500h7M4.500 7.500h7" stroke="#8a94b0" stroke-width="1"/></svg>
<svg width="300" height="600" style="left:0;top:0" shape-rendering="crispEdges"><path d="M47.500 364V384M47.500 400V402M47.500 418V528M47.500 544V546M68.500 364V374M68.500 374.500H80M52 393.500H60M52 411.500H60M52 537.500H60M52 555.500H60M68.500 418V518M69 428.500H80M69 446.500H80M69 464.500H80M69 482.500H80M69 500.500H80M69 518.500H80M68.500 562V572" stroke="#b4b4b4" stroke-width="1" stroke-dasharray="1 1" fill="none"/><rect x="43.500" y="388.5" width="8" height="8" fill="#fff" stroke="#8a8a8a"/><path d="M45 392.5h5" stroke="#000"/><path d="M47.500 390v5" stroke="#000"/><rect x="43.500" y="406.5" width="8" height="8" fill="#fff" stroke="#8a8a8a"/><path d="M45 410.5h5" stroke="#000"/><rect x="43.500" y="532.5" width="8" height="8" fill="#fff" stroke="#8a8a8a"/><path d="M45 536.5h5" stroke="#000"/><path d="M47.500 534v5" stroke="#000"/><rect x="43.500" y="550.5" width="8" height="8" fill="#fff" stroke="#8a8a8a"/><path d="M45 554.5h5" stroke="#000"/></svg>
<svg width="15" height="16" viewBox="0 0 15 16" style="left:81px;top:366px"><circle cx="7.500" cy="4.500" r="3.500" fill="#f0b060" stroke="#a86820" stroke-width=".7"/><path d="M4 2.500q3.500-3.500 7 0" stroke="#b87020" stroke-width="1.600" fill="none"/><path d="M1 15.500q0-7 6.500-7t6.500 7z" fill="#28b838" stroke="#0a6a1a" stroke-width=".8"/><path d="M5.500 9l2 3 2-3" fill="#f4f4f4"/></svg>
<span class="t" style="left:102.5px;top:368.69px;font-size:11px;line-height:11px;color:#000;letter-spacing:-0.060px;-webkit-text-stroke:0.12px #000;">810245: eugeni</span>
<svg width="15" height="15" viewBox="0 0 16 16" style="left:61px;top:384px"><rect x="0.500" y="0.500" width="15" height="15" rx="2.500" fill="#f8d860" stroke="#c8a030"/><path d="M10.500 3.500q-2.500-1-3 2l-1 7M5 7.500h5" stroke="#6a5000" stroke-width="1.500" fill="none"/></svg>
<span class="t" style="left:81.5px;top:386.69px;font-size:11px;line-height:11px;color:#000;letter-spacing:0.147px;-webkit-text-stroke:0.12px #000;">Индикаторы</span>
<svg width="18" height="17" viewBox="0 0 16 16" style="left:59px;top:402px"><ellipse cx="8" cy="5" rx="7.500" ry="3" fill="#4a9ee0" stroke="#2a6aa8" stroke-width=".6"/><ellipse cx="8" cy="3.600" rx="3.800" ry="2.800" fill="#78c0f0"/><path d="M4.500 7.500l4 6 3-2.500-2.500-4z" fill="#f8e070" stroke="#a88820" stroke-width=".6"/><path d="M9 12l3 3 2.500-2.500-3-3z" fill="#f0c840" stroke="#a88820" stroke-width=".6"/></svg>
<span class="t" style="left:81.5px;top:404.69px;font-size:11px;line-height:11px;color:#000;letter-spacing:0.084px;-webkit-text-stroke:0.12px #000;">Советники</span>
<svg width="17" height="16" viewBox="0 0 16 16" style="left:80px;top:420px"><ellipse cx="8" cy="5" rx="7.500" ry="3" fill="#a0a0a0" stroke="#686868" stroke-width=".6"/><ellipse cx="8" cy="3.600" rx="3.800" ry="2.800" fill="#c0c0c0"/><path d="M4.500 7.500l4 6 3-2.500-2.500-4z" fill="#d8d8d8" stroke="#707070" stroke-width=".6"/><path d="M9 12l3 3 2.500-2.500-3-3z" fill="#b0b0b0" stroke="#707070" stroke-width=".6"/></svg>
<span class="t" style="left:102.5px;top:422.69px;font-size:11px;line-height:11px;color:#000;letter-spacing:-0.151px;-webkit-text-stroke:0.12px #000;">FapTurbo52</span>
<svg width="17" height="16" viewBox="0 0 16 16" style="left:80px;top:438px"><ellipse cx="8" cy="5" rx="7.500" ry="3" fill="#4a9ee0" stroke="#2a6aa8" stroke-width=".6"/><ellipse cx="8" cy="3.600" rx="3.800" ry="2.800" fill="#78c0f0"/><path d="M4.500 7.500l4 6 3-2.500-2.500-4z" fill="#f8e070" stroke="#a88820" stroke-width=".6"/><path d="M9 12l3 3 2.500-2.500-3-3z" fill="#f0c840" stroke="#a88820" stroke-width=".6"/></svg>
<span class="t" style="left:102.5px;top:440.69px;font-size:11px;line-height:11px;color:#000;letter-spacing:-0.218px;-webkit-text-stroke:0.12px #000;">ForexUltimateBot_H1</span>
<svg width="17" height="16" viewBox="0 0 16 16" style="left:80px;top:456px"><ellipse cx="8" cy="5" rx="7.500" ry="3" fill="#4a9ee0" stroke="#2a6aa8" stroke-width=".6"/><ellipse cx="8" cy="3.600" rx="3.800" ry="2.800" fill="#78c0f0"/><path d="M4.500 7.500l4 6 3-2.500-2.500-4z" fill="#f8e070" stroke="#a88820" stroke-width=".6"/><path d="M9 12l3 3 2.500-2.500-3-3z" fill="#f0c840" stroke="#a88820" stroke-width=".6"/></svg>
<span class="t" style="left:102.5px;top:458.69px;font-size:11px;line-height:11px;color:#000;letter-spacing:-0.613px;-webkit-text-stroke:0.12px #000;">MACD Sample</span>
<svg width="17" height="16" viewBox="0 0 16 16" style="left:80px;top:474px"><ellipse cx="8" cy="5" rx="7.500" ry="3" fill="#4a9ee0" stroke="#2a6aa8" stroke-width=".6"/><ellipse cx="8" cy="3.600" rx="3.800" ry="2.800" fill="#78c0f0"/><path d="M4.500 7.500l4 6 3-2.500-2.500-4z" fill="#f8e070" stroke="#a88820" stroke-width=".6"/><path d="M9 12l3 3 2.500-2.500-3-3z" fill="#f0c840" stroke="#a88820" stroke-width=".6"/></svg>
<span class="t" style="left:102.5px;top:476.69px;font-size:11px;line-height:11px;color:#000;letter-spacing:-0.084px;-webkit-text-stroke:0.12px #000;">Moving Average</span>
<svg width="17" height="16" viewBox="0 0 16 16" style="left:80px;top:492px"><ellipse cx="8" cy="5" rx="7.500" ry="3" fill="#a0a0a0" stroke="#686868" stroke-width=".6"/><ellipse cx="8" cy="3.600" rx="3.800" ry="2.800" fill="#c0c0c0"/><path d="M4.500 7.500l4 6 3-2.500-2.500-4z" fill="#d8d8d8" stroke="#707070" stroke-width=".6"/><path d="M9 12l3 3 2.500-2.500-3-3z" fill="#b0b0b0" stroke="#707070" stroke-width=".6"/></svg>
<span class="t" style="left:102.5px;top:494.69px;font-size:11px;line-height:11px;color:#000;letter-spacing:-0.303px;-webkit-text-stroke:0.12px #000;">PipLaser_1.01</span>
<svg width="16" height="16" viewBox="0 0 16 16" style="left:81px;top:510px"><circle cx="8" cy="8" r="7" fill="#3a8ae0" stroke="#1a4a98" stroke-width=".8"/><path d="M4 5q2-3 4-1 0 2-2 3t-1 3q-2-1-1-5zM10 7q3 0 3 3-1 3-3 3-1-3 0-6z" fill="#78d048"/><path d="M9 3q2 0 3 2-2 1-3-2z" fill="#f0e050"/></svg>
<span class="t" style="left:102.5px;top:512.69px;font-size:11px;line-height:11px;color:#000;letter-spacing:0.126px;-webkit-text-stroke:0.12px #000;">741 еще...</span>
<svg width="15" height="15" viewBox="0 0 16 16" style="left:61px;top:528px"><rect x="0.500" y="0.500" width="15" height="15" rx="2.500" fill="#f8d860" stroke="#c8a030"/><path d="M10.500 3.500q-2.500-1-3 2l-1 7M5 7.500h5" stroke="#6a5000" stroke-width="1.500" fill="none"/><path d="M10 10l4 5h-5z" fill="#f0c028" stroke="#8a6a10" stroke-width=".7"/></svg>
<span class="t" style="left:81.5px;top:530.69px;font-size:11px;line-height:11px;color:#000;letter-spacing:0.091px;-webkit-text-stroke:0.12px #000;">Пользовательские Индикаторы</span>
<svg width="17" height="16" viewBox="0 0 17 16" style="left:61px;top:546px"><path d="M3 1.500h10v3h-2v9h-8v-9h-2z" fill="#f8e088" stroke="#b89028" stroke-width=".8"/><path d="M5 6h4M5 8h4M5 10h4" stroke="#b89028" stroke-width=".8"/><path d="M9 11l4 4h-5z" fill="#f0c028" stroke="#8a6a10" stroke-width=".7"/></svg>
<span class="t" style="left:81.5px;top:548.69px;font-size:11px;line-height:11px;color:#000;letter-spacing:0.154px;-webkit-text-stroke:0.12px #000;">Скрипты</span>
<div class="b" style="left:80px;top:563px;width:120px;height:8px;overflow:hidden"><svg width="17" height="16" viewBox="0 0 16 16" style="left:0;top:1px"><path d="M3 1.500h10v3h-2v9h-8v-9h-2z" fill="#f8e088" stroke="#b89028" stroke-width=".8"/><path d="M5 6h4M5 8h4M5 10h4" stroke="#b89028" stroke-width=".8"/><path d="M9 11l4 4h-5z" fill="#f0c028" stroke="#8a6a10" stroke-width=".7"/></svg><span class="t" style="left:22.500px;top:3.700px;font-size:11px;line-height:11px;color:#000">close</span></div>
<div class="b" style="left:33px;top:571px;width:258px;height:1px;background:#000;"></div>
<div class="b" style="left:36px;top:571px;width:55px;height:18px;background:#fff;box-sizing:border-box;border:1px solid #000;border-top:none;border-right-width:2px;border-bottom-width:2px;"></div>
<span class="t" style="left:45px;top:575.69px;font-size:11px;line-height:11px;color:#000;letter-spacing:-0.234px;-webkit-text-stroke:0.12px #000;">Общие</span>
<span class="t" style="left:100px;top:575.69px;font-size:11px;line-height:11px;color:#808080;letter-spacing:-0.194px;-webkit-text-stroke:0.12px #808080;">Избранное</span>
<div class="b" style="left:164px;top:576px;width:1px;height:11px;background:#707070;"></div>
<svg width="1280" height="800" style="left:0;top:0" shape-rendering="crispEdges"><rect x="290" y="100" width="990" height="1" fill="#b4b4bc"/><rect x="290" y="101" width="990" height="1" fill="#74747c"/><rect x="1278" y="102" width="2" height="471" fill="#ececf0"/><rect x="292" y="102" width="986" height="471" fill="#000"/><path d="M327.5 104V555 M359.5 104V555 M391.5 104V555 M423.5 104V555 M455.5 104V555 M487.5 104V555 M519.5 104V555 M551.5 104V555 M583.5 104V555 M615.5 104V555 M647.5 104V555 M679.5 104V555 M711.5 104V555 M743.5 104V555 M775.5 104V555 M807.5 104V555 M839.5 104V555 M871.5 104V555 M903.5 104V555 M935.5 104V555 M967.5 104V555 M999.5 104V555 M1031.5 104V555 M1063.5 104V555 M1095.5 104V555 M1127.5 104V555 M1159.5 104V555 M1191.5 104V555 M1223.5 104V555" stroke="#a2a2a2" stroke-width="1" stroke-dasharray="3 3" fill="none"/><path d="M296 137.5H1238 M296 169.5H1238 M296 201.5H1238 M296 233.5H1238 M296 265.5H1238 M296 297.5H1238 M296 329.5H1238 M296 361.5H1238 M296 393.5H1238 M296 425.5H1238 M296 457.5H1238 M296 489.5H1238 M296 521.5H1238 M296 553.5H1238" stroke="#a2a2a2" stroke-width="1" stroke-dasharray="3 3" fill="none"/><path d="M296 439.5H1238" stroke="#94c894" stroke-width="1" stroke-dasharray="9 6 3 6" fill="none"/><path d="M295 452.5H1238" stroke="#b4b4b4" stroke-width="1" fill="none"/><clipPath id="cc"><rect x="295" y="105" width="943" height="450"/></clipPath><g clip-path="url(#cc)"><path d="M295.5 135V146 M303.5 126V150 M311.5 141V157 M319.5 150V185 M327.5 176V193 M335.5 175V196 M343.5 172V211 M351.5 180V208 M359.5 198V239 M367.5 210V234 M375.5 209V218 M383.5 201V220 M391.5 207V221 M399.5 193V219 M407.5 187V203 M415.5 191V213 M423.5 194V215 M431.5 200V230 M439.5 216V229 M447.5 214V253 M455.5 242V293 M463.5 280V303 M471.5 290V317 M479.5 300V311 M487.5 294V311 M495.5 290V298 M503.5 280V294 M511.5 285V294 M519.5 284V293 M527.5 287V303 M535.5 283V297 M543.5 282V293 M551.5 282V293 M559.5 285V299 M567.5 295V306 M575.5 296V310 M583.5 290V300 M591.5 281V298 M599.5 282V290 M607.5 272V316 M615.5 284V313 M623.5 287V297 M631.5 285V304 M639.5 292V332 M647.5 303V328 M655.5 297V315 M663.5 291V312 M671.5 294V304 M679.5 284V304 M687.5 284V294 M695.5 293V303 M703.5 295V303 M711.5 296V304 M719.5 293V311 M727.5 293V304 M735.5 297V316 M743.5 309V330 M751.5 316V332 M759.5 316V336 M767.5 327V354 M775.5 338V355 M783.5 327V349 M791.5 321V333 M799.5 329V338 M807.5 326V347 M815.5 325V347 M823.5 335V380 M831.5 371V391 M839.5 372V401 M847.5 367V386 M855.5 366V384 M863.5 371V417 M871.5 402V475 M879.5 443V464 M887.5 434V450 M895.5 422V446 M903.5 409V437 M911.5 409V429 M919.5 418V450 M927.5 445V469 M935.5 434V479 M943.5 454V470 M951.5 450V464 M959.5 438V452 M967.5 422V449 M975.5 429V457 M983.5 439V489 M991.5 456V502 M999.5 453V471 M1007.5 458V508 M1015.5 499V516 M1023.5 510V524 M1031.5 511V527 M1039.5 498V521 M1047.5 486V507 M1055.5 474V492 M1063.5 466V492 M1071.5 448V477 M1079.5 464V485 M1087.5 478V497 M1095.5 474V495 M1103.5 491V505 M1111.5 471V503 M1119.5 451V489 M1127.5 457V478 M1135.5 437V473 M1143.5 441V469 M1151.5 452V474 M1159.5 417V474 M1167.5 382V421 M1175.5 383V422 M1183.5 392V419 M1191.5 392V413 M1199.5 391V420 M1207.5 408V443 M1215.5 433V452" stroke="#44e244" stroke-width="1" fill="none"/><path d="M293 138h5v2h-5z M301 137h5v12h-5z M309 148h5v8h-5z M317 155h5v24h-5z M325 178h5v10h-5z M333 175h5v12h-5z M341 174h5v20h-5z M349 193h5v7h-5z M357 199h5v35h-5z M365 212h5v22h-5z M373 213h5v2h-5z M381 211h5v4h-5z M389 211h5v8h-5z M397 194h5v25h-5z M405 194h5v3h-5z M413 196h5v10h-5z M421 204h5v2h-5z M429 204h5v22h-5z M437 219h5v7h-5z M445 219h5v28h-5z M453 247h5v43h-5z M461 289h5v5h-5z M469 294h5v17h-5z M477 302h5v9h-5z M485 296h5v7h-5z M493 292h5v4h-5z M501 286h5v7h-5z M509 289h5v1h-5z M517 287h5v3h-5z M525 287h5v7h-5z M533 284h5v9h-5z M541 284h5v9h-5z M549 285h5v8h-5z M557 287h5v12h-5z M565 298h5v4h-5z M573 296h5v6h-5z M581 297h5v1h-5z M589 289h5v8h-5z M597 284h5v6h-5z M605 285h5v18h-5z M613 289h5v14h-5z M621 289h5v7h-5z M629 293h5v3h-5z M637 293h5v35h-5z M645 307h5v21h-5z M653 307h5v2h-5z M661 297h5v12h-5z M669 297h5v4h-5z M677 290h5v13h-5z M685 290h5v4h-5z M693 295h5v5h-5z M701 300h5v2h-5z M709 300h5v2h-5z M717 294h5v6h-5z M725 294h5v5h-5z M733 299h5v15h-5z M741 313h5v16h-5z M749 322h5v7h-5z M757 322h5v10h-5z M765 331h5v12h-5z M773 343h5v2h-5z M781 332h5v12h-5z M789 331h5v2h-5z M797 331h5v6h-5z M805 335h5v2h-5z M813 336h5v5h-5z M821 340h5v38h-5z M829 377h5v4h-5z M837 381h5v1h-5z M845 381h5v2h-5z M853 372h5v11h-5z M861 372h5v32h-5z M869 404h5v56h-5z M877 448h5v12h-5z M885 446h5v3h-5z M893 429h5v17h-5z M901 414h5v15h-5z M909 414h5v11h-5z M917 424h5v22h-5z M925 446h5v10h-5z M933 456h5v6h-5z M941 461h5v2h-5z M949 451h5v11h-5z M957 443h5v8h-5z M965 431h5v13h-5z M973 431h5v15h-5z M981 446h5v20h-5z M989 461h5v5h-5z M997 461h5v9h-5z M1005 469h5v39h-5z M1013 507h5v9h-5z M1021 515h5v9h-5z M1029 520h5v7h-5z M1037 503h5v18h-5z M1045 492h5v12h-5z M1053 482h5v10h-5z M1061 466h5v16h-5z M1069 466h5v8h-5z M1077 473h5v11h-5z M1085 484h5v5h-5z M1093 489h5v5h-5z M1101 493h5v8h-5z M1109 474h5v27h-5z M1117 464h5v10h-5z M1125 465h5v1h-5z M1133 448h5v17h-5z M1141 448h5v21h-5z M1149 459h5v10h-5z M1157 421h5v38h-5z M1165 391h5v30h-5z M1173 391h5v21h-5z M1181 397h5v15h-5z M1189 397h5v2h-5z M1197 399h5v13h-5z M1205 411h5v27h-5z M1213 437h5v15h-5z" fill="#4cf04c"/><path d="M302 138h3v10h-3z M310 149h3v6h-3z M318 156h3v22h-3z M326 179h3v8h-3z M342 175h3v18h-3z M350 194h3v5h-3z M358 200h3v33h-3z M390 212h3v6h-3z M406 195h3v1h-3z M414 197h3v8h-3z M430 205h3v20h-3z M446 220h3v26h-3z M454 248h3v41h-3z M462 290h3v3h-3z M470 295h3v15h-3z M526 288h3v5h-3z M542 285h3v7h-3z M558 288h3v10h-3z M566 299h3v2h-3z M606 286h3v16h-3z M622 290h3v5h-3z M638 294h3v33h-3z M670 298h3v2h-3z M686 291h3v2h-3z M694 296h3v3h-3z M726 295h3v3h-3z M734 300h3v13h-3z M742 314h3v14h-3z M758 323h3v8h-3z M766 332h3v10h-3z M798 332h3v4h-3z M814 337h3v3h-3z M822 341h3v36h-3z M830 378h3v2h-3z M862 373h3v30h-3z M870 405h3v54h-3z M910 415h3v9h-3z M918 425h3v20h-3z M926 447h3v8h-3z M934 457h3v4h-3z M974 432h3v13h-3z M982 447h3v18h-3z M998 462h3v7h-3z M1006 470h3v37h-3z M1014 508h3v7h-3z M1022 516h3v7h-3z M1070 467h3v6h-3z M1078 474h3v9h-3z M1086 485h3v3h-3z M1094 490h3v3h-3z M1102 494h3v6h-3z M1142 449h3v19h-3z M1174 392h3v19h-3z M1198 400h3v11h-3z M1206 412h3v25h-3z M1214 438h3v13h-3z" fill="#fff"/><path d="M334 176h3v10h-3z M366 213h3v20h-3z M382 212h3v2h-3z M398 195h3v23h-3z M438 220h3v5h-3z M478 303h3v7h-3z M486 297h3v5h-3z M494 293h3v2h-3z M502 287h3v5h-3z M518 288h3v1h-3z M534 285h3v7h-3z M550 286h3v6h-3z M574 297h3v4h-3z M590 290h3v6h-3z M598 285h3v4h-3z M614 290h3v12h-3z M630 294h3v1h-3z M646 308h3v19h-3z M662 298h3v10h-3z M678 291h3v11h-3z M718 295h3v4h-3z M750 323h3v5h-3z M782 333h3v10h-3z M854 373h3v9h-3z M878 449h3v10h-3z M886 447h3v1h-3z M894 430h3v15h-3z M902 415h3v13h-3z M950 452h3v9h-3z M958 444h3v6h-3z M966 432h3v11h-3z M990 462h3v3h-3z M1030 521h3v5h-3z M1038 504h3v16h-3z M1046 493h3v10h-3z M1054 483h3v8h-3z M1062 467h3v14h-3z M1110 475h3v25h-3z M1118 465h3v8h-3z M1134 449h3v15h-3z M1150 460h3v8h-3z M1158 422h3v36h-3z M1166 392h3v28h-3z M1182 398h3v13h-3z" fill="#000"/><path d="M295.5 526V555 M303.5 527V555 M311.5 527V555 M319.5 518V555 M327.5 516V555 M335.5 525V555 M343.5 519V555 M351.5 523V555 M359.5 524V555 M367.5 534V555 M375.5 536V555 M383.5 531V555 M391.5 542V555 M399.5 537V555 M407.5 539V555 M415.5 538V555 M423.5 536V555 M431.5 538V555 M439.5 536V555 M447.5 533V555 M455.5 529V555 M463.5 528V555 M471.5 530V555 M479.5 546V555 M487.5 548V555 M495.5 552V555 M503.5 550V555 M511.5 553V555 M519.5 552V555 M527.5 550V555 M535.5 552V555 M543.5 552V555 M551.5 549V555 M559.5 551V555 M567.5 550V555 M575.5 547V555 M583.5 548V555 M591.5 546V555 M599.5 550V555 M607.5 537V555 M615.5 534V555 M623.5 544V555 M631.5 541V555 M639.5 537V555 M647.5 542V555 M655.5 543V555 M663.5 542V555 M671.5 547V555 M679.5 547V555 M687.5 547V555 M695.5 547V555 M703.5 547V555 M711.5 547V555 M719.5 541V555 M727.5 546V555 M735.5 547V555 M743.5 542V555 M751.5 547V555 M759.5 546V555 M767.5 542V555 M775.5 542V555 M783.5 546V555 M791.5 540V555 M799.5 547V555 M807.5 542V555 M815.5 537V555 M823.5 535V555 M831.5 528V555 M839.5 530V555 M847.5 532V555 M855.5 536V555 M863.5 515V555 M871.5 512V555 M879.5 519V555 M887.5 528V555 M895.5 529V555 M903.5 530V555 M911.5 529V555 M919.5 527V555 M927.5 517V555 M935.5 518V555 M943.5 517V555 M951.5 528V555 M959.5 528V555 M967.5 530V555 M975.5 522V555 M983.5 518V555 M991.5 509V555 M999.5 523V555 M1007.5 508V555 M1015.5 505V555 M1023.5 510V555 M1031.5 511V555 M1039.5 500V555 M1047.5 511V555 M1055.5 492V555 M1063.5 506V555 M1071.5 510V555 M1079.5 515V555 M1087.5 519V555 M1095.5 518V555 M1103.5 516V555 M1111.5 511V555 M1119.5 512V555 M1127.5 522V555 M1135.5 518V555 M1143.5 524V555 M1151.5 527V555 M1159.5 518V555 M1167.5 501V555 M1175.5 515V555 M1183.5 524V555 M1191.5 524V555 M1199.5 525V555 M1207.5 527V555 M1215.5 545V555" stroke="#7cc07c" stroke-width="1" fill="none"/></g><path d="M294.5 104V555.5H1238.5V104.5H294" stroke="#fff" stroke-width="1" fill="none"/><path d="M1239 137.5h3 M1239 169.5h3 M1239 201.5h3 M1239 233.5h3 M1239 265.5h3 M1239 297.5h3 M1239 329.5h3 M1239 361.5h3 M1239 393.5h3 M1239 425.5h3 M1239 457.5h3 M1239 489.5h3 M1239 521.5h3 M1239 553.5h3 M295.5 556v3 M359.5 556v3 M423.5 556v3 M487.5 556v3 M551.5 556v3 M615.5 556v3 M679.5 556v3 M743.5 556v3 M807.5 556v3 M871.5 556v3 M935.5 556v3 M999.5 556v3 M1063.5 556v3 M1127.5 556v3 M1191.5 556v3" stroke="#fff" stroke-width="1" fill="none"/><rect x="1241" y="446" width="37" height="11" fill="#fff"/></svg>
<span class="t" style="left:298.5px;top:109.10px;font-size:9.33px;line-height:9.33px;color:#fff;transform:scaleX(0.9894);transform-origin:left center;-webkit-text-stroke:0.28px #fff;">EURUSD,M15</span>
<span class="t" style="left:365.6px;top:109.10px;font-size:9.33px;line-height:9.33px;color:#fff;transform:scaleX(0.9507);transform-origin:left center;-webkit-text-stroke:0.28px #fff;">1.37112</span>
<span class="t" style="left:401.2px;top:109.10px;font-size:9.33px;line-height:9.33px;color:#fff;transform:scaleX(0.9311);transform-origin:left center;-webkit-text-stroke:0.28px #fff;">1.37148</span>
<span class="t" style="left:437.4px;top:109.10px;font-size:9.33px;line-height:9.33px;color:#fff;transform:scaleX(0.9311);transform-origin:left center;-webkit-text-stroke:0.28px #fff;">1.36961</span>
<span class="t" style="left:473.5px;top:109.10px;font-size:9.33px;line-height:9.33px;color:#fff;transform:scaleX(0.9311);transform-origin:left center;-webkit-text-stroke:0.28px #fff;">1.36967</span>
<span class="t" style="left:300px;top:429.60px;font-size:9.33px;line-height:9.33px;color:#fff;transform:scaleX(0.9897);transform-origin:left center;-webkit-text-stroke:0.28px #fff;">#4268239 sell</span>
<span class="t" style="left:1245px;top:133.10px;font-size:9.33px;line-height:9.33px;color:#fff;transform:scaleX(0.9311);transform-origin:left center;-webkit-text-stroke:0.28px #fff;">1.40010</span>
<span class="t" style="left:1245px;top:165.10px;font-size:9.33px;line-height:9.33px;color:#fff;transform:scaleX(0.9311);transform-origin:left center;-webkit-text-stroke:0.28px #fff;">1.39700</span>
<span class="t" style="left:1245px;top:197.10px;font-size:9.33px;line-height:9.33px;color:#fff;transform:scaleX(0.9311);transform-origin:left center;-webkit-text-stroke:0.28px #fff;">1.39390</span>
<span class="t" style="left:1245px;top:229.10px;font-size:9.33px;line-height:9.33px;color:#fff;transform:scaleX(0.9311);transform-origin:left center;-webkit-text-stroke:0.28px #fff;">1.39080</span>
<span class="t" style="left:1245px;top:261.10px;font-size:9.33px;line-height:9.33px;color:#fff;transform:scaleX(0.9311);transform-origin:left center;-webkit-text-stroke:0.28px #fff;">1.38770</span>
<span class="t" style="left:1245px;top:293.10px;font-size:9.33px;line-height:9.33px;color:#fff;transform:scaleX(0.9311);transform-origin:left center;-webkit-text-stroke:0.28px #fff;">1.38460</span>
<span class="t" style="left:1245px;top:325.10px;font-size:9.33px;line-height:9.33px;color:#fff;transform:scaleX(0.9311);transform-origin:left center;-webkit-text-stroke:0.28px #fff;">1.38150</span>
<span class="t" style="left:1245px;top:357.10px;font-size:9.33px;line-height:9.33px;color:#fff;transform:scaleX(0.9311);transform-origin:left center;-webkit-text-stroke:0.28px #fff;">1.37840</span>
<span class="t" style="left:1245px;top:389.10px;font-size:9.33px;line-height:9.33px;color:#fff;transform:scaleX(0.9311);transform-origin:left center;-webkit-text-stroke:0.28px #fff;">1.37530</span>
<span class="t" style="left:1245px;top:421.10px;font-size:9.33px;line-height:9.33px;color:#fff;transform:scaleX(0.9311);transform-origin:left center;-webkit-text-stroke:0.28px #fff;">1.37220</span>
<div class="b" style="left:1240px;top:457px;width:40px;height:5px;overflow:hidden"><span class="t" style="left:5px;top:-3.90px;font-size:9.33px;line-height:9.33px;color:#fff;transform:scaleX(0.9311);transform-origin:left center;-webkit-text-stroke:.28px #fff">1.36910</span></div>
<span class="t" style="left:1245px;top:485.10px;font-size:9.33px;line-height:9.33px;color:#fff;transform:scaleX(0.9311);transform-origin:left center;-webkit-text-stroke:0.28px #fff;">1.36600</span>
<span class="t" style="left:1245px;top:517.10px;font-size:9.33px;line-height:9.33px;color:#fff;transform:scaleX(0.9311);transform-origin:left center;-webkit-text-stroke:0.28px #fff;">1.36290</span>
<span class="t" style="left:1245px;top:549.10px;font-size:9.33px;line-height:9.33px;color:#fff;transform:scaleX(0.9311);transform-origin:left center;-webkit-text-stroke:0.28px #fff;">1.35980</span>
<span class="t" style="left:1245px;top:448.10px;font-size:9.33px;line-height:9.33px;color:#000;transform:scaleX(0.9311);transform-origin:left center;-webkit-text-stroke:0.28px #000;">1.36967</span>
<span class="t" style="left:293.5px;top:560.10px;font-size:9.33px;line-height:9.33px;color:#fff;transform:scaleX(1.0015);transform-origin:left center;-webkit-text-stroke:0.28px #fff;">31 Oct 2011</span>
<span class="t" style="left:357.5px;top:560.10px;font-size:9.33px;line-height:9.33px;color:#fff;transform:scaleX(1.0015);transform-origin:left center;-webkit-text-stroke:0.28px #fff;">31 Oct 18:15</span>
<span class="t" style="left:421.5px;top:560.10px;font-size:9.33px;line-height:9.33px;color:#fff;transform:scaleX(1.0015);transform-origin:left center;-webkit-text-stroke:0.28px #fff;">31 Oct 20:15</span>
<span class="t" style="left:485.5px;top:560.10px;font-size:9.33px;line-height:9.33px;color:#fff;transform:scaleX(1.0015);transform-origin:left center;-webkit-text-stroke:0.28px #fff;">31 Oct 22:15</span>
<span class="t" style="left:550.2px;top:560.10px;font-size:9.33px;line-height:9.33px;color:#fff;transform:scaleX(1.0015);transform-origin:left center;-webkit-text-stroke:0.28px #fff;">1 Nov 00:15</span>
<span class="t" style="left:614.2px;top:560.10px;font-size:9.33px;line-height:9.33px;color:#fff;transform:scaleX(1.0015);transform-origin:left center;-webkit-text-stroke:0.28px #fff;">1 Nov 02:15</span>
<span class="t" style="left:678.2px;top:560.10px;font-size:9.33px;line-height:9.33px;color:#fff;transform:scaleX(1.0015);transform-origin:left center;-webkit-text-stroke:0.28px #fff;">1 Nov 04:15</span>
<span class="t" style="left:742.2px;top:560.10px;font-size:9.33px;line-height:9.33px;color:#fff;transform:scaleX(1.0015);transform-origin:left center;-webkit-text-stroke:0.28px #fff;">1 Nov 06:15</span>
<span class="t" style="left:806.2px;top:560.10px;font-size:9.33px;line-height:9.33px;color:#fff;transform:scaleX(1.0015);transform-origin:left center;-webkit-text-stroke:0.28px #fff;">1 Nov 08:15</span>
<span class="t" style="left:870.2px;top:560.10px;font-size:9.33px;line-height:9.33px;color:#fff;transform:scaleX(1.0015);transform-origin:left center;-webkit-text-stroke:0.28px #fff;">1 Nov 10:15</span>
<span class="t" style="left:934.2px;top:560.10px;font-size:9.33px;line-height:9.33px;color:#fff;transform:scaleX(1.0015);transform-origin:left center;-webkit-text-stroke:0.28px #fff;">1 Nov 12:15</span>
<span class="t" style="left:998.2px;top:560.10px;font-size:9.33px;line-height:9.33px;color:#fff;transform:scaleX(1.0015);transform-origin:left center;-webkit-text-stroke:0.28px #fff;">1 Nov 14:15</span>
<span class="t" style="left:1062.2px;top:560.10px;font-size:9.33px;line-height:9.33px;color:#fff;transform:scaleX(1.0015);transform-origin:left center;-webkit-text-stroke:0.28px #fff;">1 Nov 16:15</span>
<span class="t" style="left:1126.2px;top:560.10px;font-size:9.33px;line-height:9.33px;color:#fff;transform:scaleX(1.0015);transform-origin:left center;-webkit-text-stroke:0.28px #fff;">1 Nov 18:15</span>
<span class="t" style="left:1190.2px;top:560.10px;font-size:9.33px;line-height:9.33px;color:#fff;transform:scaleX(1.0015);transform-origin:left center;-webkit-text-stroke:0.28px #fff;">1 Nov 20:15</span>
<div class="b" style="left:292px;top:573px;width:986px;height:2px;background:#fff;"></div>
<div class="b" style="left:290px;top:575px;width:990px;height:1px;background:#484848;"></div>
<div class="b" style="left:290px;top:575px;width:1px;height:19px;background:#606060;"></div>
<div class="b" style="left:291px;top:576px;width:989px;height:19px;background:#e9e9ee;"></div>
<div class="b" style="left:292px;top:594px;width:986px;height:1px;background:#f8f8fa;"></div>
<span class="t" style="left:304px;top:578.69px;font-size:11px;line-height:11px;color:#8a8a8a;letter-spacing:-0.810px;-webkit-text-stroke:0.12px #8a8a8a;">AUDUSD,M1</span>
<span class="t" style="left:383.5px;top:578.69px;font-size:11px;line-height:11px;color:#8a8a8a;letter-spacing:-0.754px;-webkit-text-stroke:0.12px #8a8a8a;">EURAUD,M1</span>
<span class="t" style="left:464px;top:578.69px;font-size:11px;line-height:11px;color:#8a8a8a;letter-spacing:-0.810px;-webkit-text-stroke:0.12px #8a8a8a;">AUDUSD,M1</span>
<span class="t" style="left:634px;top:578.69px;font-size:11px;line-height:11px;color:#8a8a8a;letter-spacing:-0.490px;-webkit-text-stroke:0.12px #8a8a8a;">AUDUSD,Weekly</span>
<div class="b" style="left:374px;top:578px;width:1px;height:12px;background:#707070;"></div>
<div class="b" style="left:454px;top:578px;width:1px;height:12px;background:#707070;"></div>
<div class="b" style="left:726px;top:578px;width:1px;height:12px;background:#707070;"></div>
<div class="b" style="left:534px;top:575px;width:89px;height:19px;background:#fff;box-sizing:border-box;border:1px solid #000;border-top:none;border-right-width:2px;border-bottom-width:2px;"></div>
<span class="t" style="left:545.7px;top:578.69px;font-size:11px;line-height:11px;color:#000;letter-spacing:-0.690px;-webkit-text-stroke:0.12px #000;">EURUSD,M15</span>
<svg width="24" height="8" style="left:1251px;top:581px"><path d="M4.500 0.500l-3.500 3.500 3.500 3.500zM18.500 0.500l3.500 3.500-3.500 3.500z" fill="#a4a4ac"/></svg>
<div class="b" style="left:31px;top:595px;width:1249px;height:4px;background:#e4e4ea;"></div>
<div class="b" style="left:31px;top:598px;width:1249px;height:1px;background:#a8a8b2;"></div>
<div class="b" style="left:31px;top:599px;width:15px;height:178px;background:#ececf1;"></div>
<div class="b" style="left:31px;top:614px;width:14px;height:162px;background:linear-gradient(90deg,#80b2e8,#72a6e0);"></div>
<svg width="8" height="7" style="left:33px;top:601.5px"><path d="M1 0.800l5 4.600M6 0.800l-5 4.600" stroke="#000" stroke-width="1.900"/></svg>
<span class="t" style="left:32.500px;top:773px;font-size:11px;line-height:12px;color:#fff;transform-origin:0 0;transform:rotate(-90deg);letter-spacing:0.2px">Терминал</span>
<div class="b" style="left:45px;top:599px;width:1231px;height:156px;background:#fff;"></div>
<div class="b" style="left:1276px;top:599px;width:4px;height:178px;background:#f2f2f6;"></div>
<div class="b" style="left:45px;top:599px;width:1px;height:157px;background:#8a8a98;"></div>
<div class="b" style="left:46px;top:755px;width:1230px;height:1px;background:#000;"></div>
<div class="b" style="left:46px;top:600px;width:1230px;height:20px;background:linear-gradient(180deg,#fff 0px,#fff 15px,#ececf0 20px);"></div>
<div class="b" style="left:167px;top:602px;width:1px;height:17px;background:#d0d0d8;"></div>
<div class="b" style="left:373px;top:602px;width:1px;height:17px;background:#d0d0d8;"></div>
<div class="b" style="left:458px;top:602px;width:1px;height:17px;background:#d0d0d8;"></div>
<div class="b" style="left:522px;top:602px;width:1px;height:17px;background:#d0d0d8;"></div>
<div class="b" style="left:606px;top:602px;width:1px;height:17px;background:#d0d0d8;"></div>
<div class="b" style="left:699px;top:602px;width:1px;height:17px;background:#d0d0d8;"></div>
<div class="b" style="left:792px;top:602px;width:1px;height:17px;background:#d0d0d8;"></div>
<div class="b" style="left:885px;top:602px;width:1px;height:17px;background:#d0d0d8;"></div>
<div class="b" style="left:978px;top:602px;width:1px;height:17px;background:#d0d0d8;"></div>
<div class="b" style="left:1071px;top:602px;width:1px;height:17px;background:#d0d0d8;"></div>
<div class="b" style="left:1164px;top:602px;width:1px;height:17px;background:#d0d0d8;"></div>
<span class="t" style="left:52px;top:604.69px;font-size:11px;line-height:11px;color:#000;letter-spacing:-0.114px;-webkit-text-stroke:0.12px #000;">Ордер</span>
<span class="t" style="left:97px;top:605.53px;font-size:10px;line-height:10px;color:#707070;-webkit-text-stroke:0.12px #707070;">/</span>
<span class="t" style="right:912px;top:604.69px;font-size:11px;line-height:11px;color:#000;letter-spacing:-0.118px;-webkit-text-stroke:0.12px #000;">Время</span>
<span class="t" style="right:827px;top:604.69px;font-size:11px;line-height:11px;color:#000;letter-spacing:-0.112px;-webkit-text-stroke:0.12px #000;">Тип</span>
<span class="t" style="right:763px;top:604.69px;font-size:11px;line-height:11px;color:#000;letter-spacing:-0.409px;-webkit-text-stroke:0.12px #000;">Объём</span>
<span class="t" style="right:679px;top:604.69px;font-size:11px;line-height:11px;color:#000;letter-spacing:-0.277px;-webkit-text-stroke:0.12px #000;">Символ</span>
<span class="t" style="right:586px;top:604.69px;font-size:11px;line-height:11px;color:#000;letter-spacing:-0.111px;-webkit-text-stroke:0.12px #000;">Цена</span>
<span class="t" style="right:493px;top:604.69px;font-size:11px;line-height:11px;color:#000;letter-spacing:-0.324px;-webkit-text-stroke:0.12px #000;">S / L</span>
<span class="t" style="right:400px;top:604.69px;font-size:11px;line-height:11px;color:#000;letter-spacing:-0.205px;-webkit-text-stroke:0.12px #000;">T / P</span>
<span class="t" style="right:307px;top:604.69px;font-size:11px;line-height:11px;color:#000;letter-spacing:-0.111px;-webkit-text-stroke:0.12px #000;">Цена</span>
<span class="t" style="right:214px;top:604.69px;font-size:11px;line-height:11px;color:#000;letter-spacing:-0.042px;-webkit-text-stroke:0.12px #000;">Комиссия</span>
<span class="t" style="right:121px;top:604.69px;font-size:11px;line-height:11px;color:#000;letter-spacing:-0.185px;-webkit-text-stroke:0.12px #000;">Своп</span>
<span class="t" style="right:11px;top:604.69px;font-size:11px;line-height:11px;color:#000;letter-spacing:-0.075px;-webkit-text-stroke:0.12px #000;">Прибыль</span>
<div class="b" style="left:46px;top:620px;width:1230px;height:20px;background:#3256a6;"></div>
<div class="b" style="left:167px;top:620px;width:1px;height:20px;background:#e0e6f4;"></div>
<div class="b" style="left:373px;top:620px;width:1px;height:20px;background:#e0e6f4;"></div>
<div class="b" style="left:458px;top:620px;width:1px;height:20px;background:#e0e6f4;"></div>
<div class="b" style="left:522px;top:620px;width:1px;height:20px;background:#e0e6f4;"></div>
<div class="b" style="left:606px;top:620px;width:1px;height:20px;background:#e0e6f4;"></div>
<div class="b" style="left:699px;top:620px;width:1px;height:20px;background:#e0e6f4;"></div>
<div class="b" style="left:792px;top:620px;width:1px;height:20px;background:#e0e6f4;"></div>
<div class="b" style="left:885px;top:620px;width:1px;height:20px;background:#e0e6f4;"></div>
<div class="b" style="left:978px;top:620px;width:1px;height:20px;background:#e0e6f4;"></div>
<div class="b" style="left:1071px;top:620px;width:1px;height:20px;background:#e0e6f4;"></div>
<div class="b" style="left:1164px;top:620px;width:1px;height:20px;background:#e0e6f4;"></div>
<svg width="15" height="17" viewBox="0 0 15 17" style="left:50px;top:622px"><path d="M1.500 0.500h8l3 3v11h-11z" fill="#fbfbfb" stroke="#808080"/><path d="M9.500 0.500v3h3" fill="#e0e0e0" stroke="#808080" stroke-width=".8"/><circle cx="10.500" cy="12.500" r="3.500" fill="#e03020" stroke="#801008" stroke-width=".8"/><circle cx="9.600" cy="11.600" r="1.200" fill="#ff9080"/></svg>
<span class="t" style="left:70.5px;top:624.69px;font-size:11px;line-height:11px;color:#fff;letter-spacing:-0.117px;-webkit-text-stroke:0.12px #fff;">4268239</span>
<span class="t" style="right:910.5px;top:624.69px;font-size:11px;line-height:11px;color:#fff;letter-spacing:0.313px;-webkit-text-stroke:0.12px #fff;">2011.11.01 20:59</span>
<span class="t" style="right:825.5px;top:624.69px;font-size:11px;line-height:11px;color:#fff;letter-spacing:-0.126px;-webkit-text-stroke:0.12px #fff;">sell</span>
<span class="t" style="right:761.5px;top:624.69px;font-size:11px;line-height:11px;color:#fff;letter-spacing:0.148px;-webkit-text-stroke:0.12px #fff;">1.00</span>
<span class="t" style="right:677.5px;top:624.69px;font-size:11px;line-height:11px;color:#fff;letter-spacing:0.562px;-webkit-text-stroke:0.12px #fff;">eurusd</span>
<span class="t" style="right:584.5px;top:624.69px;font-size:11px;line-height:11px;color:#fff;letter-spacing:0.177px;-webkit-text-stroke:0.12px #fff;">1.37093</span>
<span class="t" style="right:491.5px;top:624.69px;font-size:11px;line-height:11px;color:#fff;letter-spacing:0.177px;-webkit-text-stroke:0.12px #fff;">0.00000</span>
<span class="t" style="right:398.5px;top:624.69px;font-size:11px;line-height:11px;color:#fff;letter-spacing:0.177px;-webkit-text-stroke:0.12px #fff;">0.00000</span>
<span class="t" style="right:305.5px;top:624.69px;font-size:11px;line-height:11px;color:#fff;letter-spacing:0.177px;-webkit-text-stroke:0.12px #fff;">1.36978</span>
<span class="t" style="right:212.5px;top:624.69px;font-size:11px;line-height:11px;color:#fff;letter-spacing:0.286px;-webkit-text-stroke:0.12px #fff;">-5.00</span>
<span class="t" style="right:119.5px;top:624.69px;font-size:11px;line-height:11px;color:#fff;letter-spacing:0.148px;-webkit-text-stroke:0.12px #fff;">0.00</span>
<span class="t" style="right:9px;top:624.69px;font-size:11px;line-height:11px;color:#fff;letter-spacing:0.279px;-webkit-text-stroke:0.12px #fff;">115.00</span>
<div class="b" style="left:46px;top:640px;width:1230px;height:20px;background:#ffa4a4;"></div>
<div class="b" style="left:1071px;top:640px;width:1px;height:20px;background:#ffe4e4;"></div>
<div class="b" style="left:1164px;top:640px;width:1px;height:20px;background:#ffe4e4;"></div>
<svg width="13" height="14" viewBox="0 0 13 14" style="left:49px;top:643px"><rect x="0.500" y="0.500" width="12" height="13" fill="#fcfcfc" stroke="#707070"/><path d="M6.500 2.500l4 4.500h-2.500v4h-3v-4h-2.500z" fill="#28c028" stroke="#0a6a0a" stroke-width=".8"/></svg>
<span class="t" style="left:70px;top:644.69px;font-size:11px;line-height:11px;color:#000;font-weight:bold;letter-spacing:0.444px;-webkit-text-stroke:.3px #000;">Баланс: 1 894.40  Средства: 2 004.40  Залог: 1 370.93  Свободно: 633.47  Уровень: 146.21%</span>
<span class="t" style="right:9px;top:644.69px;font-size:11px;line-height:11px;color:#000;font-weight:bold;letter-spacing:0.661px;-webkit-text-stroke:.3px #000;">110.00</span>
<div class="b" style="left:46px;top:756px;width:1234px;height:21px;background:#e9e9ee;"></div>
<div class="b" style="left:48px;top:756px;width:68px;height:17px;background:#fff;box-sizing:border-box;border:1px solid #000;border-top:none;border-right-width:2px;border-bottom-width:2px;"></div>
<span class="t" style="left:57.5px;top:759.69px;font-size:11px;line-height:11px;color:#000;letter-spacing:0.132px;-webkit-text-stroke:0.12px #000;">Торговля</span>
<span class="t" style="left:124px;top:759.69px;font-size:11px;line-height:11px;color:#8a8a8a;letter-spacing:0.035px;-webkit-text-stroke:0.12px #8a8a8a;">История Счета</span>
<span class="t" style="left:220.5px;top:759.69px;font-size:11px;line-height:11px;color:#8a8a8a;letter-spacing:-0.088px;-webkit-text-stroke:0.12px #8a8a8a;">Сигналы</span>
<span class="t" style="left:284px;top:759.69px;font-size:11px;line-height:11px;color:#8a8a8a;letter-spacing:0.080px;-webkit-text-stroke:0.12px #8a8a8a;">Почтовый ящик</span>
<span class="t" style="left:385px;top:759.69px;font-size:11px;line-height:11px;color:#8a8a8a;letter-spacing:0.096px;-webkit-text-stroke:0.12px #8a8a8a;">Эксперты</span>
<span class="t" style="left:455.5px;top:759.69px;font-size:11px;line-height:11px;color:#8a8a8a;letter-spacing:-0.022px;-webkit-text-stroke:0.12px #8a8a8a;">Журнал</span>
<div class="b" style="left:211px;top:759px;width:1px;height:12px;background:#707070;"></div>
<div class="b" style="left:275px;top:759px;width:1px;height:12px;background:#707070;"></div>
<div class="b" style="left:375px;top:759px;width:1px;height:12px;background:#707070;"></div>
<div class="b" style="left:445px;top:759px;width:1px;height:12px;background:#707070;"></div>
<div class="b" style="left:506px;top:759px;width:1px;height:12px;background:#707070;"></div>
<div class="b" style="left:30px;top:777px;width:1250px;height:1px;background:#b0b0b8;"></div>
<div class="b" style="left:30px;top:778px;width:1250px;height:22px;background:linear-gradient(180deg,#f4f4f7,#e8e8ee);"></div>
<span class="t" style="left:30.5px;top:785.69px;font-size:11px;line-height:11px;color:#000;letter-spacing:0.015px;-webkit-text-stroke:0.12px #000;">Для справки, нажмите F1</span>
<div class="b" style="left:558px;top:781px;width:1px;height:17px;background:#b4b4bc;"></div>
<div class="b" style="left:559px;top:781px;width:1px;height:17px;background:#fff;"></div>
<div class="b" style="left:668px;top:781px;width:1px;height:17px;background:#b4b4bc;"></div>
<div class="b" style="left:669px;top:781px;width:1px;height:17px;background:#fff;"></div>
<div class="b" style="left:769px;top:781px;width:1px;height:17px;background:#b4b4bc;"></div>
<div class="b" style="left:770px;top:781px;width:1px;height:17px;background:#fff;"></div>
<div class="b" style="left:840px;top:781px;width:1px;height:17px;background:#b4b4bc;"></div>
<div class="b" style="left:841px;top:781px;width:1px;height:17px;background:#fff;"></div>
<div class="b" style="left:911px;top:781px;width:1px;height:17px;background:#b4b4bc;"></div>
<div class="b" style="left:912px;top:781px;width:1px;height:17px;background:#fff;"></div>
<div class="b" style="left:982px;top:781px;width:1px;height:17px;background:#b4b4bc;"></div>
<div class="b" style="left:983px;top:781px;width:1px;height:17px;background:#fff;"></div>
<div class="b" style="left:1052px;top:781px;width:1px;height:17px;background:#b4b4bc;"></div>
<div class="b" style="left:1053px;top:781px;width:1px;height:17px;background:#fff;"></div>
<div class="b" style="left:1118px;top:781px;width:1px;height:17px;background:#b4b4bc;"></div>
<div class="b" style="left:1119px;top:781px;width:1px;height:17px;background:#fff;"></div>
<span class="t" style="left:564px;top:785.69px;font-size:11px;line-height:11px;color:#000;letter-spacing:0.021px;-webkit-text-stroke:0.12px #000;">Default</span>
<svg width="26" height="14" style="left:1123px;top:784px" shape-rendering="crispEdges"><rect x="1" y="1" width="2" height="10" fill="#4a9a2a"/><rect x="1" y="11" width="2" height="2" fill="#c82018"/><rect x="4" y="1" width="2" height="9" fill="#4a9a2a"/><rect x="4" y="10" width="2" height="3" fill="#c82018"/><rect x="7" y="1" width="2" height="8" fill="#4a9a2a"/><rect x="7" y="9" width="2" height="4" fill="#c82018"/><rect x="10" y="1" width="2" height="7" fill="#4a9a2a"/><rect x="10" y="8" width="2" height="5" fill="#c82018"/><rect x="13" y="1" width="2" height="6" fill="#4a9a2a"/><rect x="13" y="7" width="2" height="6" fill="#c82018"/><rect x="16" y="1" width="2" height="5" fill="#4a9a2a"/><rect x="16" y="6" width="2" height="7" fill="#c82018"/><rect x="19" y="1" width="2" height="4" fill="#4a9a2a"/><rect x="19" y="5" width="2" height="8" fill="#c82018"/><rect x="22" y="1" width="2" height="3" fill="#4a9a2a"/><rect x="22" y="4" width="2" height="9" fill="#c82018"/></svg>
<span class="t" style="left:1169.5px;top:785.69px;font-size:11px;line-height:11px;color:#000;letter-spacing:-0.193px;-webkit-text-stroke:0.12px #000;">13700/6 kb</span>
<svg width="14" height="14" style="left:1265px;top:785px"><path d="M13 3L3 13M13 7l-6 6M13 11l-2 2" stroke="#a0a0a8" stroke-width="1.300"/></svg>
</div></body></html>
